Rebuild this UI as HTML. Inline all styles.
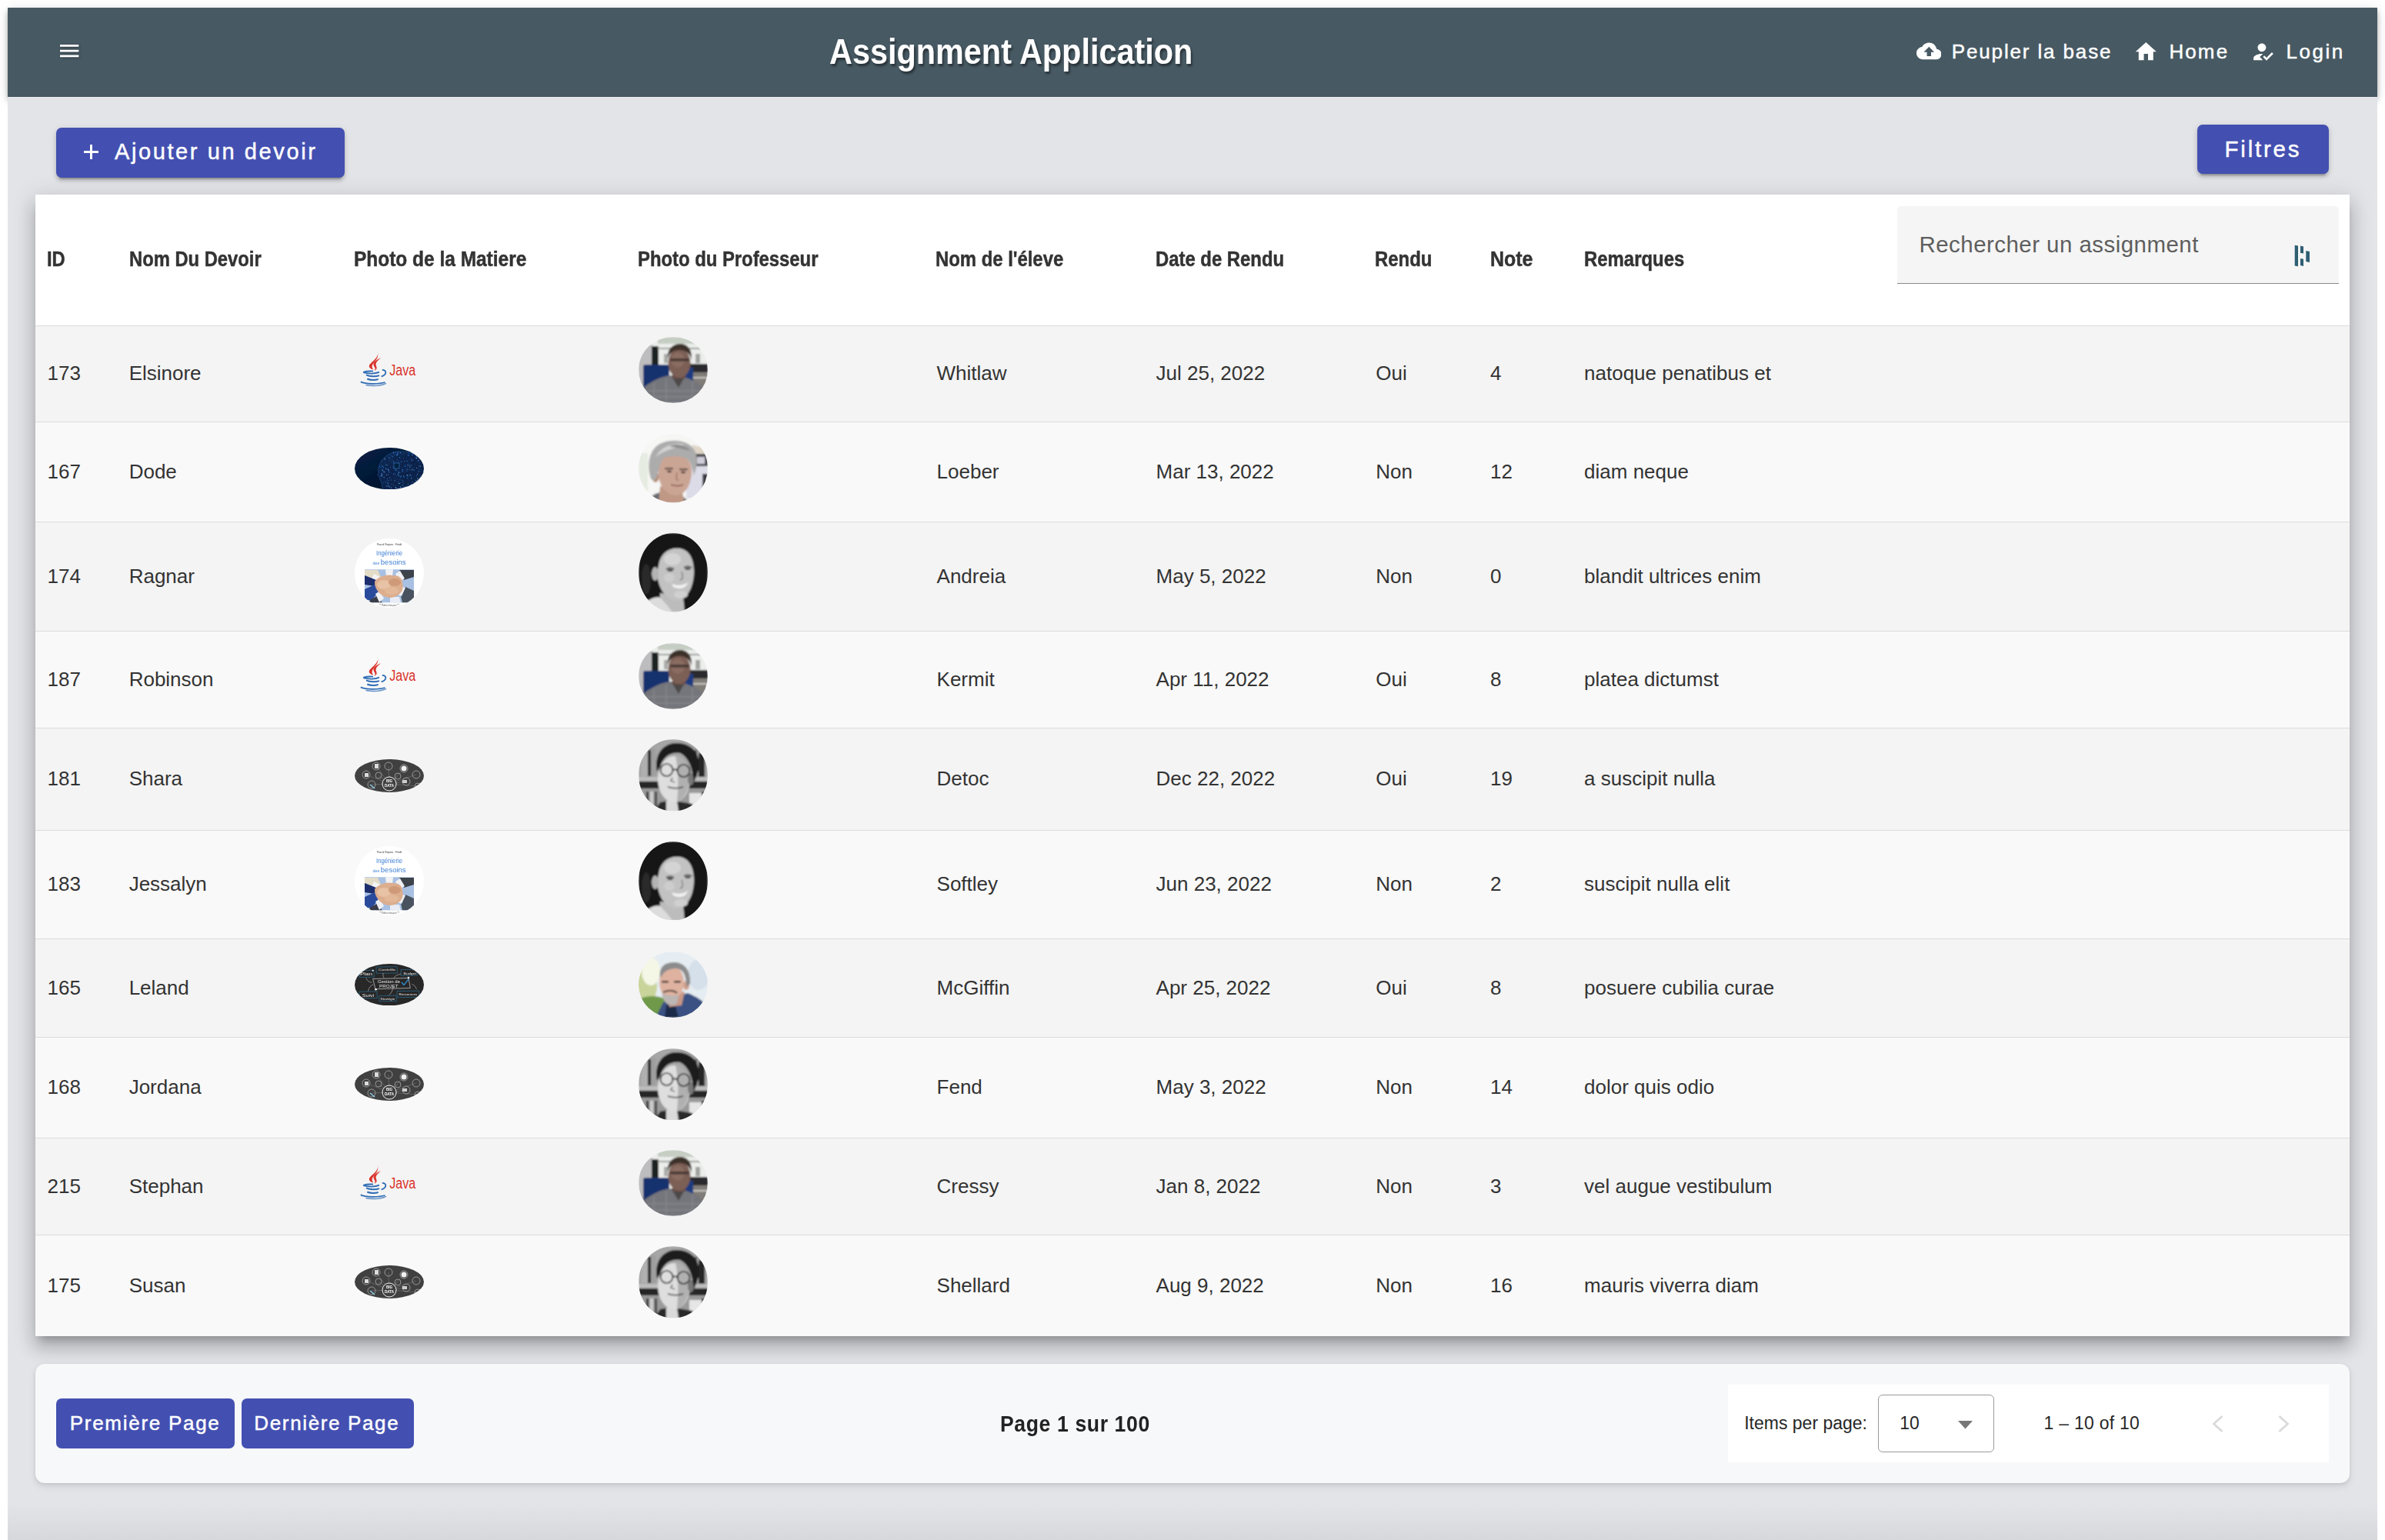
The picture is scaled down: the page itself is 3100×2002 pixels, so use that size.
<!DOCTYPE html>
<html><head><meta charset="utf-8"><title>Assignment Application</title>
<style>
html,body{margin:0;padding:0;}
body{width:3100px;height:2002px;position:relative;overflow:hidden;background:#fff;font-family:"Liberation Sans", sans-serif;}
.t{position:absolute;white-space:nowrap;font-family:"Liberation Sans", sans-serif;}
</style></head><body>
<div style="position:absolute;left:10px;top:10px;width:3080px;height:1992px;background:#e3e4e8;"></div>
<div style="position:absolute;left:10px;top:10px;width:3080px;height:116px;background:#475963;box-shadow:0 3px 6px -1px rgba(0,0,0,.2),0 6px 8px 0 rgba(0,0,0,.14),0 2px 14px 0 rgba(0,0,0,.12);"></div>
<div style="position:absolute;left:10px;top:126px;width:3080px;height:1876px;background:#e3e4e8;"></div>
<div style="position:absolute;left:10px;top:126px;width:3080px;height:1px;background:#e9eaed;"></div>
<div style="position:absolute;left:10px;top:1955px;width:3080px;height:47px;background:linear-gradient(to bottom,rgba(0,0,0,0),rgba(0,0,0,.055));"></div>
<svg style="position:absolute;left:73.60px;top:50.00px;filter:drop-shadow(1px 1.5px 1.5px rgba(0,0,0,.35));" width="32.4" height="32.4" viewBox="0 0 24 24"><path fill="#fff" d="M3 18h18v-2H3v2zm0-5h18v-2H3v2zm0-7v2h18V6H3z"/></svg>
<div class="t" style="left:1078.19px;top:44.20px;font-size:46px;line-height:46px;font-weight:700;color:#fff;letter-spacing:0px;transform:scaleX(0.9);transform-origin:0 0;text-shadow:2px 3px 3px rgba(0,0,0,.45);">Assignment Application</div>
<svg style="position:absolute;left:2490.80px;top:50.40px;" width="32.6" height="32.6" viewBox="0 0 24 24"><path fill="#fff" d="M19.35 10.04C18.67 6.59 15.64 4 12 4 9.11 4 6.6 5.64 5.35 8.04 2.34 8.36 0 10.91 0 14c0 3.31 2.69 6 6 6h13c2.76 0 5-2.24 5-5 0-2.64-2.05-4.78-4.65-4.96zM14 13v4h-4v-4H7l5-5 5 5h-3z"/></svg>
<div class="t" style="left:2536.75px;top:54.30px;font-size:26px;line-height:26px;font-weight:400;color:#fff;letter-spacing:1.86px;-webkit-text-stroke:0.45px #fff;">Peupler la base</div>
<svg style="position:absolute;left:2773.30px;top:50.60px;" width="32.6" height="32.6" viewBox="0 0 24 24"><path fill="#fff" d="M10 20v-6h4v6h5v-8h3L12 3 2 12h3v8z"/></svg>
<div class="t" style="left:2819.45px;top:54.30px;font-size:26px;line-height:26px;font-weight:400;color:#fff;letter-spacing:2.1px;-webkit-text-stroke:0.45px #fff;">Home</div>
<svg style="position:absolute;left:2924.90px;top:50.60px;" width="32.6" height="32.6" viewBox="0 0 24 24"><path fill="#fff" d="M9 17l3-2.94c-.39-.04-.68-.06-1-.06-2.67 0-8 1.34-8 4v2h9l-3-3zm2-5c2.21 0 4-1.79 4-4s-1.79-4-4-4-4 1.79-4 4 1.79 4 4 4m4.47 8.5L12 17l1.4-1.41 2.07 2.08 5.13-5.17 1.4 1.41z"/></svg>
<div class="t" style="left:2971.55px;top:54.30px;font-size:26px;line-height:26px;font-weight:400;color:#fff;letter-spacing:2.5px;-webkit-text-stroke:0.45px #fff;">Login</div>
<div style="position:absolute;left:73px;top:166px;width:375px;height:65px;background:#4350b1;border-radius:7px;box-shadow:0 6px 2px -4px rgba(0,0,0,.2),0 4px 4px 0 rgba(0,0,0,.14),0 2px 10px 0 rgba(0,0,0,.12);"></div>
<div style="position:absolute;left:108.9px;top:196.2px;width:19.1px;height:3px;background:#fff;"></div>
<div style="position:absolute;left:117px;top:188.1px;width:3px;height:19.2px;background:#fff;"></div>
<div class="t" style="left:149.02px;top:183.35px;font-size:29px;line-height:29px;font-weight:400;color:#fff;letter-spacing:2.6px;-webkit-text-stroke:0.45px #fff;">Ajouter un devoir</div>
<div style="position:absolute;left:2856px;top:162px;width:171px;height:64px;background:#4350b1;border-radius:7px;box-shadow:0 6px 2px -4px rgba(0,0,0,.2),0 4px 4px 0 rgba(0,0,0,.14),0 2px 10px 0 rgba(0,0,0,.12);"></div>
<div class="t" style="left:2891.59px;top:179.23px;font-size:29.5px;line-height:29.5px;font-weight:400;color:#fff;letter-spacing:2.75px;-webkit-text-stroke:0.45px #fff;">Filtres</div>
<div style="position:absolute;left:46px;top:253px;width:3008px;height:1484px;background:#fff;box-shadow:0 10px 10px -6px rgba(0,0,0,.2),0 16px 20px 2px rgba(0,0,0,.14),0 6px 28px 4px rgba(0,0,0,.12);"></div>
<div class="t" style="left:61.02px;top:324.45px;font-size:27px;line-height:27px;font-weight:700;color:#333;letter-spacing:0px;transform:scaleX(0.88);transform-origin:0 0;-webkit-text-stroke:0.5px #333;">ID</div>
<div class="t" style="left:167.62px;top:324.45px;font-size:27px;line-height:27px;font-weight:700;color:#333;letter-spacing:0px;transform:scaleX(0.88);transform-origin:0 0;-webkit-text-stroke:0.5px #333;">Nom Du Devoir</div>
<div class="t" style="left:460.17px;top:324.45px;font-size:27px;line-height:27px;font-weight:700;color:#333;letter-spacing:0px;transform:scaleX(0.906);transform-origin:0 0;-webkit-text-stroke:0.5px #333;">Photo de la Matiere</div>
<div class="t" style="left:829.41px;top:324.45px;font-size:27px;line-height:27px;font-weight:700;color:#333;letter-spacing:0px;transform:scaleX(0.883);transform-origin:0 0;-webkit-text-stroke:0.5px #333;">Photo du Professeur</div>
<div class="t" style="left:1216.21px;top:324.45px;font-size:27px;line-height:27px;font-weight:700;color:#333;letter-spacing:0px;transform:scaleX(0.884);transform-origin:0 0;-webkit-text-stroke:0.5px #333;">Nom de l'éleve</div>
<div class="t" style="left:1502.21px;top:324.45px;font-size:27px;line-height:27px;font-weight:700;color:#333;letter-spacing:0px;transform:scaleX(0.884);transform-origin:0 0;-webkit-text-stroke:0.5px #333;">Date de Rendu</div>
<div class="t" style="left:1787.21px;top:324.45px;font-size:27px;line-height:27px;font-weight:700;color:#333;letter-spacing:0px;transform:scaleX(0.886);transform-origin:0 0;-webkit-text-stroke:0.5px #333;">Rendu</div>
<div class="t" style="left:1936.73px;top:324.45px;font-size:27px;line-height:27px;font-weight:700;color:#333;letter-spacing:0px;transform:scaleX(0.924);transform-origin:0 0;-webkit-text-stroke:0.5px #333;">Note</div>
<div class="t" style="left:2059.01px;top:324.45px;font-size:27px;line-height:27px;font-weight:700;color:#333;letter-spacing:0px;transform:scaleX(0.886);transform-origin:0 0;-webkit-text-stroke:0.5px #333;">Remarques</div>
<div style="position:absolute;left:2466px;top:268px;width:574px;height:100px;background:#f5f5f5;border-radius:5px 5px 0 0;"></div>
<div style="position:absolute;left:2466px;top:368px;width:574px;height:1px;background:#8a8a8a;"></div>
<div class="t" style="left:2494.49px;top:302.82px;font-size:29.5px;line-height:29.5px;font-weight:400;color:#5e5e5e;letter-spacing:0.45px;">Rechercher un assignment</div>
<svg style="position:absolute;left:2980px;top:316px" width="26" height="34" viewBox="0 0 26 34"><polygon fill="#2e5f73" points="2.7,2.8 7,3.6 7,30.3 2.7,29.5"/><polygon fill="#2e5f73" points="10,3.6 14,4.4 14,13.6 10,12.8"/><polygon fill="#2e5f73" points="10,20 14,20.8 14,29.9 10,29.1"/><polygon fill="#2e5f73" points="17.3,10 22,10.9 22,24.9 17.3,24"/></svg>
<div style="position:absolute;left:46px;top:423px;width:3008px;height:125px;background:#f4f4f4;"></div>
<div style="position:absolute;left:46px;top:423px;width:3008px;height:1px;background:#dcdcdc;"></div>
<div class="t" style="left:61.55px;top:472.10px;font-size:26px;line-height:26px;font-weight:400;color:#333;letter-spacing:0px;">173</div>
<div class="t" style="left:167.65px;top:472.10px;font-size:26px;line-height:26px;font-weight:400;color:#333;letter-spacing:0px;">Elsinore</div>
<svg style="position:absolute;left:461px;top:450.7px" width="90" height="56" viewBox="0 0 90 56"><path d="M29.6 5.3 C31.5 10 29 13.5 25 17.5 C20 22 17.5 24 19.5 27 C21 28.8 23 29.3 24.3 29.5 C22.8 27.8 21.8 25.5 23.5 22.5 C26 18.5 32.5 14 29.6 5.3 Z" fill="#d9332b"/><path d="M34 14.3 C30.5 15.5 25.5 18.5 24.6 21.5 C23.8 24.5 27 26.5 26.6 28.5 C26.4 29.5 26 30.2 25.8 30.8 C28.5 29.5 29.2 27.5 28.2 25.2 C27 22.5 26.8 20 34 14.3 Z" fill="#d9332b"/><path d="M11.2 32.9 C16 31.2 20.5 31.4 24 31.6 M11.2 33.2 C18 35.3 27 35 32 32.7" fill="none" stroke="#2f6db5" stroke-width="1.9"/><path d="M35.8 29.8 C41.5 30 42.5 36 34.6 38.4" fill="none" stroke="#2f6db5" stroke-width="1.8"/><path d="M15 36.3 C20 38.8 28 38.6 32 37.1" fill="none" stroke="#2f6db5" stroke-width="2"/><path d="M16.3 41.5 C21 43.6 27.5 43.4 30.7 41.9" fill="none" stroke="#2f6db5" stroke-width="2"/><path d="M7.8 45.4 C14 48.5 31 48.6 39.5 46" fill="none" stroke="#2f6db5" stroke-width="1.8"/><path d="M14.5 49.5 C24 51.2 34 50.5 41 47.3" fill="none" stroke="#2f6db5" stroke-width="1.3" opacity=".75"/><text x="45.2" y="37.1" font-family="Liberation Sans" font-size="19.5" fill="#d9332b" textLength="34" lengthAdjust="spacingAndGlyphs">Java</text></svg>
<svg style="position:absolute;left:830px;top:438.2px" width="90" height="86" viewBox="0 0 90 86"><defs><clipPath id="c1"><ellipse cx="45.0" cy="43.0" rx="45.0" ry="43.0"/></clipPath><filter id="f1" x="-10%" y="-10%" width="120%" height="120%"><feGaussianBlur stdDeviation="1.1"/></filter></defs><g clip-path="url(#c1)"><g filter="url(#f1)"><rect x="0" y="0" width="90" height="86" fill="#eceeec"/><rect x="25" y="0" width="65" height="9" fill="#c6cec4"/><rect x="0" y="10" width="18" height="76" fill="#bdbdc0"/><rect x="17" y="12" width="9" height="34" fill="#1e2022"/><rect x="25" y="14" width="65" height="2" fill="#9aa09a"/><rect x="33" y="22" width="5" height="12" fill="#a8aaa8"/><rect x="74" y="22" width="6" height="12" fill="#a0a2a0"/><rect x="62" y="35" width="28" height="11" fill="#2a2b2d"/><rect x="62" y="46" width="28" height="40" fill="#807c78"/><rect x="62" y="52" width="28" height="2" fill="#c8c6c2"/><rect x="6" y="36" width="34" height="34" rx="3" fill="#17306e"/><rect x="58" y="40" width="13" height="18" fill="#1d3a80"/><path d="M0 86 L6 66 C16 58 28 52 40 50 L62 53 C74 57 84 64 90 72 L90 86 Z" fill="#74767c"/><path d="M10 70 L90 70 M10 78 L90 78 M20 60 L20 86 M36 54 L36 86 M70 58 L70 86" stroke="#8a8c90" stroke-width="2.5" opacity=".5"/><path d="M42 50 L52 66 L60 52 Z" fill="#4e4a48"/><rect x="44" y="42" width="17" height="12" fill="#6a5048"/><ellipse cx="53" cy="34" rx="14.5" ry="19" fill="#7c5e54"/><ellipse cx="51" cy="30" rx="9" ry="10" fill="#8a6c60"/><path d="M38 28 C37 13 47 9 54 9 C63 9 70 15 69 30 C67 21 61 17 53 17 C45 17 40 21 38 28Z" fill="#3c302c"/><rect x="41" y="28" width="25" height="3.5" rx="1.5" fill="#463834"/></g></g></svg>
<div class="t" style="left:1217.55px;top:472.10px;font-size:26px;line-height:26px;font-weight:400;color:#333;letter-spacing:0px;">Whitlaw</div>
<div class="t" style="left:1502.55px;top:472.10px;font-size:26px;line-height:26px;font-weight:400;color:#333;letter-spacing:0px;">Jul 25, 2022</div>
<div class="t" style="left:1788.35px;top:472.10px;font-size:26px;line-height:26px;font-weight:400;color:#333;letter-spacing:0px;">Oui</div>
<div class="t" style="left:1937.05px;top:472.10px;font-size:26px;line-height:26px;font-weight:400;color:#333;letter-spacing:0px;">4</div>
<div class="t" style="left:2059.05px;top:472.10px;font-size:26px;line-height:26px;font-weight:400;color:#333;letter-spacing:0px;">natoque penatibus et</div>
<div style="position:absolute;left:46px;top:548px;width:3008px;height:130px;background:#f9f9f9;"></div>
<div style="position:absolute;left:46px;top:548px;width:3008px;height:1px;background:#dcdcdc;"></div>
<div class="t" style="left:61.55px;top:599.60px;font-size:26px;line-height:26px;font-weight:400;color:#333;letter-spacing:0px;">167</div>
<div class="t" style="left:167.65px;top:599.60px;font-size:26px;line-height:26px;font-weight:400;color:#333;letter-spacing:0px;">Dode</div>
<svg style="position:absolute;left:461px;top:581.5px" width="90" height="54.4" viewBox="0 0 90 54.4"><defs><clipPath id="c2"><ellipse cx="45.0" cy="27.2" rx="45.0" ry="27.2"/></clipPath><filter id="f2" x="-10%" y="-10%" width="120%" height="120%"><feGaussianBlur stdDeviation="0.2"/></filter></defs><g clip-path="url(#c2)"><g filter="url(#f2)"><defs><linearGradient id="aig" x1="0" y1="0" x2="1" y2="1"><stop offset="0" stop-color="#082247"/><stop offset=".6" stop-color="#041630"/><stop offset="1" stop-color="#020c1c"/></linearGradient></defs><rect x="0" y="0" width="90" height="55" fill="url(#aig)"/><path d="M36 52 C36 46 33 42 32 38 L29.5 35 L31.5 33 L30.5 30 C31 22 36 12 48 7 C62 2 82 6 92 20 L92 56 L40 56 Z" fill="#0b2f63" opacity=".55"/><circle cx="49.4" cy="11.8" r="0.58" fill="#3b8ef0" opacity="0.91"/><circle cx="34.9" cy="34.3" r="0.70" fill="#5aa8ff" opacity="0.52"/><circle cx="56.3" cy="7.6" r="0.30" fill="#8cc4ff" opacity="0.53"/><circle cx="64.6" cy="53.3" r="0.57" fill="#1e5bb0" opacity="0.97"/><circle cx="65.4" cy="24.6" r="0.74" fill="#3b8ef0" opacity="0.78"/><circle cx="37.4" cy="25.8" r="0.52" fill="#1e5bb0" opacity="0.65"/><circle cx="80.4" cy="13.4" r="0.54" fill="#5aa8ff" opacity="0.69"/><circle cx="63.5" cy="7.3" r="0.28" fill="#5aa8ff" opacity="0.75"/><circle cx="62.5" cy="44.4" r="0.48" fill="#8cc4ff" opacity="0.68"/><circle cx="44.7" cy="13.3" r="0.64" fill="#3b8ef0" opacity="0.79"/><circle cx="62.1" cy="49.5" r="0.61" fill="#2a70d0" opacity="0.80"/><circle cx="33.6" cy="30.6" r="0.33" fill="#2a70d0" opacity="0.58"/><circle cx="59.8" cy="6.0" r="0.58" fill="#1e5bb0" opacity="0.79"/><circle cx="84.2" cy="20.3" r="0.60" fill="#1e5bb0" opacity="0.75"/><circle cx="79.2" cy="7.6" r="0.30" fill="#2a70d0" opacity="0.74"/><circle cx="70.8" cy="7.2" r="0.60" fill="#1e5bb0" opacity="1.00"/><circle cx="80.8" cy="18.8" r="0.44" fill="#2a70d0" opacity="0.51"/><circle cx="58.1" cy="12.7" r="0.31" fill="#3b8ef0" opacity="0.61"/><circle cx="47.1" cy="42.4" r="0.45" fill="#8cc4ff" opacity="0.54"/><circle cx="57.3" cy="32.6" r="0.69" fill="#8cc4ff" opacity="0.93"/><circle cx="46.5" cy="25.6" r="0.43" fill="#8cc4ff" opacity="0.98"/><circle cx="38.5" cy="13.2" r="0.37" fill="#5aa8ff" opacity="0.51"/><circle cx="81.4" cy="13.5" r="0.39" fill="#5aa8ff" opacity="0.71"/><circle cx="52.3" cy="33.4" r="0.73" fill="#1e5bb0" opacity="0.98"/><circle cx="70.3" cy="42.5" r="0.48" fill="#1e5bb0" opacity="0.70"/><circle cx="54.1" cy="9.4" r="0.57" fill="#3b8ef0" opacity="0.60"/><circle cx="91.0" cy="26.9" r="0.30" fill="#1e5bb0" opacity="0.53"/><circle cx="35.4" cy="22.9" r="0.26" fill="#5aa8ff" opacity="0.81"/><circle cx="38.4" cy="17.1" r="0.42" fill="#2a70d0" opacity="0.74"/><circle cx="36.3" cy="29.4" r="0.74" fill="#8cc4ff" opacity="0.74"/><circle cx="50.6" cy="17.8" r="0.66" fill="#5aa8ff" opacity="0.76"/><circle cx="51.8" cy="39.9" r="0.71" fill="#1e5bb0" opacity="0.65"/><circle cx="69.5" cy="8.7" r="0.67" fill="#1e5bb0" opacity="0.68"/><circle cx="39.5" cy="44.1" r="0.52" fill="#1e5bb0" opacity="0.66"/><circle cx="43.1" cy="46.2" r="0.74" fill="#5aa8ff" opacity="0.90"/><circle cx="80.6" cy="42.5" r="0.36" fill="#1e5bb0" opacity="0.75"/><circle cx="78.8" cy="28.6" r="0.35" fill="#1e5bb0" opacity="0.98"/><circle cx="57.2" cy="52.7" r="0.74" fill="#2a70d0" opacity="0.54"/><circle cx="35.4" cy="28.4" r="0.42" fill="#8cc4ff" opacity="0.81"/><circle cx="59.2" cy="38.0" r="0.65" fill="#3b8ef0" opacity="0.92"/><circle cx="36.6" cy="24.2" r="0.61" fill="#5aa8ff" opacity="0.74"/><circle cx="40.2" cy="45.0" r="0.42" fill="#8cc4ff" opacity="0.73"/><circle cx="75.8" cy="8.4" r="0.33" fill="#5aa8ff" opacity="0.51"/><circle cx="66.2" cy="28.2" r="0.58" fill="#1e5bb0" opacity="0.91"/><circle cx="90.8" cy="38.2" r="0.43" fill="#1e5bb0" opacity="0.77"/><circle cx="74.8" cy="9.3" r="0.62" fill="#5aa8ff" opacity="0.72"/><circle cx="83.9" cy="47.0" r="0.36" fill="#2a70d0" opacity="0.61"/><circle cx="60.6" cy="43.7" r="0.41" fill="#1e5bb0" opacity="0.71"/><circle cx="51.3" cy="27.8" r="0.54" fill="#1e5bb0" opacity="0.71"/><circle cx="86.8" cy="30.1" r="0.52" fill="#1e5bb0" opacity="0.76"/><circle cx="84.0" cy="44.4" r="0.55" fill="#5aa8ff" opacity="0.59"/><circle cx="58.8" cy="41.7" r="0.53" fill="#2a70d0" opacity="0.84"/><circle cx="62.4" cy="29.1" r="0.64" fill="#1e5bb0" opacity="0.53"/><circle cx="35.2" cy="27.5" r="0.26" fill="#3b8ef0" opacity="0.72"/><circle cx="67.6" cy="30.3" r="0.51" fill="#2a70d0" opacity="0.73"/><circle cx="62.6" cy="28.9" r="0.72" fill="#1e5bb0" opacity="0.94"/><circle cx="88.4" cy="17.5" r="0.53" fill="#5aa8ff" opacity="0.92"/><circle cx="56.9" cy="7.8" r="0.37" fill="#3b8ef0" opacity="0.61"/><circle cx="48.1" cy="10.4" r="0.64" fill="#2a70d0" opacity="0.57"/><circle cx="54.1" cy="29.3" r="0.74" fill="#5aa8ff" opacity="0.58"/><circle cx="56.2" cy="30.8" r="0.42" fill="#5aa8ff" opacity="0.68"/><circle cx="34.8" cy="23.0" r="0.42" fill="#8cc4ff" opacity="0.72"/><circle cx="68.3" cy="30.6" r="0.28" fill="#5aa8ff" opacity="0.99"/><circle cx="35.6" cy="17.8" r="0.27" fill="#5aa8ff" opacity="0.64"/><circle cx="37.2" cy="26.0" r="0.71" fill="#2a70d0" opacity="0.70"/><circle cx="62.8" cy="30.8" r="0.50" fill="#2a70d0" opacity="0.54"/><circle cx="55.8" cy="7.8" r="0.72" fill="#3b8ef0" opacity="0.90"/><circle cx="57.6" cy="21.6" r="0.53" fill="#2a70d0" opacity="0.81"/><circle cx="45.5" cy="13.4" r="0.72" fill="#2a70d0" opacity="0.77"/><circle cx="42.0" cy="27.2" r="0.59" fill="#2a70d0" opacity="0.67"/><circle cx="63.7" cy="13.9" r="0.49" fill="#8cc4ff" opacity="0.55"/><circle cx="80.6" cy="26.5" r="0.50" fill="#8cc4ff" opacity="0.99"/><circle cx="48.4" cy="15.2" r="0.36" fill="#5aa8ff" opacity="0.92"/><circle cx="73.5" cy="37.1" r="0.45" fill="#2a70d0" opacity="0.99"/><circle cx="68.4" cy="49.8" r="0.47" fill="#3b8ef0" opacity="0.54"/><circle cx="82.0" cy="49.3" r="0.59" fill="#2a70d0" opacity="0.80"/><circle cx="72.6" cy="6.4" r="0.34" fill="#2a70d0" opacity="0.72"/><circle cx="90.3" cy="32.4" r="0.37" fill="#2a70d0" opacity="0.61"/><circle cx="40.5" cy="21.4" r="0.29" fill="#2a70d0" opacity="0.75"/><circle cx="41.7" cy="30.2" r="0.25" fill="#2a70d0" opacity="0.91"/><circle cx="38.1" cy="34.5" r="0.45" fill="#2a70d0" opacity="0.65"/><circle cx="43.7" cy="34.5" r="0.51" fill="#5aa8ff" opacity="0.83"/><circle cx="74.1" cy="49.7" r="0.44" fill="#2a70d0" opacity="0.86"/><circle cx="60.1" cy="18.8" r="0.56" fill="#5aa8ff" opacity="0.52"/><circle cx="81.6" cy="50.4" r="0.56" fill="#1e5bb0" opacity="0.57"/><circle cx="62.0" cy="30.2" r="0.67" fill="#3b8ef0" opacity="0.91"/><circle cx="65.8" cy="50.4" r="0.59" fill="#5aa8ff" opacity="0.54"/><circle cx="89.4" cy="23.6" r="0.48" fill="#3b8ef0" opacity="0.81"/><circle cx="68.5" cy="39.4" r="0.49" fill="#3b8ef0" opacity="0.73"/><circle cx="62.1" cy="42.8" r="0.49" fill="#3b8ef0" opacity="0.92"/><circle cx="43.8" cy="43.3" r="0.37" fill="#8cc4ff" opacity="0.75"/><circle cx="53.1" cy="28.9" r="0.59" fill="#3b8ef0" opacity="0.81"/><circle cx="69.5" cy="8.0" r="0.32" fill="#2a70d0" opacity="0.83"/><circle cx="72.7" cy="36.3" r="0.32" fill="#8cc4ff" opacity="0.53"/><circle cx="45.9" cy="38.9" r="0.60" fill="#8cc4ff" opacity="0.65"/><circle cx="61.5" cy="28.2" r="0.48" fill="#3b8ef0" opacity="1.00"/><circle cx="63.6" cy="20.2" r="0.29" fill="#8cc4ff" opacity="0.51"/><circle cx="57.9" cy="46.6" r="0.73" fill="#8cc4ff" opacity="1.00"/><circle cx="53.4" cy="51.7" r="0.72" fill="#3b8ef0" opacity="0.79"/><circle cx="37.9" cy="31.3" r="0.73" fill="#5aa8ff" opacity="0.80"/><circle cx="68.8" cy="18.5" r="0.31" fill="#2a70d0" opacity="0.62"/><circle cx="85.6" cy="29.3" r="0.26" fill="#3b8ef0" opacity="0.97"/><circle cx="71.9" cy="25.1" r="0.61" fill="#8cc4ff" opacity="0.67"/><circle cx="48.9" cy="47.7" r="0.25" fill="#2a70d0" opacity="0.92"/><circle cx="73.9" cy="50.9" r="0.39" fill="#2a70d0" opacity="0.53"/><circle cx="53.6" cy="49.2" r="0.29" fill="#8cc4ff" opacity="0.88"/><circle cx="82.8" cy="18.6" r="0.28" fill="#2a70d0" opacity="0.82"/><circle cx="56.5" cy="20.4" r="0.64" fill="#8cc4ff" opacity="0.94"/><circle cx="80.2" cy="36.8" r="0.71" fill="#1e5bb0" opacity="0.77"/><circle cx="74.3" cy="6.6" r="0.62" fill="#8cc4ff" opacity="0.81"/><circle cx="59.6" cy="51.4" r="0.53" fill="#5aa8ff" opacity="0.74"/><circle cx="50.7" cy="19.5" r="0.62" fill="#2a70d0" opacity="0.70"/><circle cx="44.0" cy="29.1" r="0.58" fill="#3b8ef0" opacity="0.58"/><circle cx="39.2" cy="14.8" r="0.70" fill="#8cc4ff" opacity="0.78"/><circle cx="57.5" cy="21.3" r="0.63" fill="#8cc4ff" opacity="0.57"/><circle cx="50.5" cy="8.7" r="0.37" fill="#2a70d0" opacity="0.90"/><circle cx="83.8" cy="23.9" r="0.62" fill="#5aa8ff" opacity="0.69"/><circle cx="50.3" cy="7.2" r="0.39" fill="#2a70d0" opacity="0.56"/><circle cx="60.7" cy="36.7" r="0.68" fill="#5aa8ff" opacity="0.55"/><circle cx="85.5" cy="24.0" r="0.57" fill="#8cc4ff" opacity="0.98"/><circle cx="82.5" cy="49.4" r="0.26" fill="#3b8ef0" opacity="0.71"/><circle cx="77.1" cy="45.8" r="0.73" fill="#8cc4ff" opacity="0.50"/><circle cx="53.7" cy="52.2" r="0.66" fill="#8cc4ff" opacity="0.99"/><circle cx="44.7" cy="9.7" r="0.33" fill="#1e5bb0" opacity="0.99"/><circle cx="73.2" cy="48.0" r="0.70" fill="#3b8ef0" opacity="0.78"/><circle cx="69.7" cy="19.8" r="0.31" fill="#2a70d0" opacity="0.76"/><circle cx="56.6" cy="43.7" r="0.30" fill="#2a70d0" opacity="0.76"/><circle cx="65.7" cy="24.2" r="0.36" fill="#1e5bb0" opacity="0.50"/><circle cx="62.9" cy="55.8" r="0.39" fill="#2a70d0" opacity="0.82"/><circle cx="84.7" cy="28.7" r="0.37" fill="#5aa8ff" opacity="0.51"/><circle cx="54.9" cy="37.8" r="0.28" fill="#5aa8ff" opacity="0.75"/><circle cx="71.5" cy="25.8" r="0.38" fill="#8cc4ff" opacity="0.96"/><circle cx="50.3" cy="25.9" r="0.59" fill="#5aa8ff" opacity="0.50"/><circle cx="47.4" cy="47.9" r="0.28" fill="#8cc4ff" opacity="0.98"/><circle cx="48.6" cy="46.6" r="0.37" fill="#5aa8ff" opacity="0.63"/><circle cx="68.3" cy="35.7" r="0.70" fill="#8cc4ff" opacity="0.71"/><circle cx="70.9" cy="53.3" r="0.32" fill="#8cc4ff" opacity="0.53"/><circle cx="55.2" cy="40.9" r="0.34" fill="#8cc4ff" opacity="0.95"/><circle cx="84.7" cy="42.1" r="0.75" fill="#5aa8ff" opacity="0.66"/><circle cx="70.9" cy="23.7" r="0.44" fill="#2a70d0" opacity="0.72"/><circle cx="34.1" cy="25.8" r="0.69" fill="#1e5bb0" opacity="0.98"/><circle cx="42.1" cy="22.5" r="0.66" fill="#8cc4ff" opacity="0.54"/><circle cx="73.4" cy="14.2" r="0.52" fill="#8cc4ff" opacity="0.60"/><circle cx="51.9" cy="50.6" r="0.27" fill="#8cc4ff" opacity="0.62"/><circle cx="68.4" cy="25.0" r="0.44" fill="#8cc4ff" opacity="0.53"/><circle cx="87.0" cy="17.4" r="0.62" fill="#1e5bb0" opacity="0.67"/><circle cx="67.9" cy="17.6" r="0.61" fill="#2a70d0" opacity="0.96"/><circle cx="47.7" cy="41.5" r="0.55" fill="#3b8ef0" opacity="0.51"/><circle cx="43.7" cy="28.7" r="0.73" fill="#8cc4ff" opacity="0.89"/><circle cx="86.6" cy="46.4" r="0.32" fill="#8cc4ff" opacity="0.59"/><circle cx="79.6" cy="42.4" r="0.66" fill="#5aa8ff" opacity="0.80"/><circle cx="49.7" cy="20.6" r="0.43" fill="#1e5bb0" opacity="0.54"/><circle cx="41.4" cy="43.2" r="0.37" fill="#3b8ef0" opacity="0.82"/><circle cx="59.3" cy="32.3" r="0.33" fill="#8cc4ff" opacity="0.94"/><circle cx="60.4" cy="40.9" r="0.47" fill="#5aa8ff" opacity="0.57"/><circle cx="58.0" cy="50.3" r="0.37" fill="#1e5bb0" opacity="0.92"/><circle cx="70.9" cy="10.3" r="0.67" fill="#2a70d0" opacity="0.64"/><circle cx="45.9" cy="17.2" r="0.38" fill="#8cc4ff" opacity="0.62"/><circle cx="44.5" cy="12.0" r="0.69" fill="#1e5bb0" opacity="0.59"/><circle cx="44.5" cy="31.4" r="0.57" fill="#3b8ef0" opacity="0.83"/><circle cx="58.9" cy="46.6" r="0.67" fill="#2a70d0" opacity="0.52"/><circle cx="47.5" cy="10.2" r="0.34" fill="#1e5bb0" opacity="0.60"/><circle cx="33.7" cy="30.7" r="0.34" fill="#1e5bb0" opacity="0.63"/><circle cx="35.7" cy="35.0" r="0.56" fill="#5aa8ff" opacity="0.52"/><circle cx="50.4" cy="6.3" r="0.75" fill="#3b8ef0" opacity="0.80"/><circle cx="70.1" cy="14.6" r="0.26" fill="#2a70d0" opacity="0.70"/><circle cx="52.4" cy="36.3" r="0.29" fill="#3b8ef0" opacity="0.90"/><circle cx="63.5" cy="7.3" r="0.30" fill="#8cc4ff" opacity="0.83"/><circle cx="38.7" cy="31.8" r="0.58" fill="#8cc4ff" opacity="0.85"/><circle cx="54.8" cy="18.7" r="0.40" fill="#3b8ef0" opacity="0.66"/><circle cx="64.7" cy="22.6" r="0.46" fill="#2a70d0" opacity="0.82"/><circle cx="53.6" cy="25.1" r="0.72" fill="#8cc4ff" opacity="0.95"/><circle cx="55.7" cy="46.7" r="0.45" fill="#2a70d0" opacity="0.73"/><circle cx="63.7" cy="37.3" r="0.70" fill="#3b8ef0" opacity="0.79"/><circle cx="87.4" cy="42.3" r="0.34" fill="#2a70d0" opacity="0.64"/><circle cx="61.8" cy="52.1" r="0.30" fill="#8cc4ff" opacity="0.88"/><circle cx="78.9" cy="45.8" r="0.40" fill="#3b8ef0" opacity="0.99"/><circle cx="59.4" cy="6.8" r="0.71" fill="#8cc4ff" opacity="0.54"/><circle cx="73.9" cy="39.8" r="0.70" fill="#5aa8ff" opacity="0.81"/><circle cx="67.7" cy="14.2" r="0.49" fill="#1e5bb0" opacity="0.61"/><circle cx="54.2" cy="30.9" r="0.44" fill="#3b8ef0" opacity="0.57"/><circle cx="41.1" cy="50.0" r="0.67" fill="#3b8ef0" opacity="0.83"/><circle cx="49.4" cy="24.3" r="0.48" fill="#2a70d0" opacity="0.82"/><circle cx="48.4" cy="17.0" r="0.44" fill="#2a70d0" opacity="0.72"/><circle cx="56.6" cy="5.2" r="0.56" fill="#8cc4ff" opacity="0.73"/><circle cx="57.1" cy="36.2" r="0.66" fill="#5aa8ff" opacity="0.91"/><circle cx="54.2" cy="7.5" r="0.43" fill="#2a70d0" opacity="0.55"/><circle cx="56.8" cy="30.5" r="0.27" fill="#5aa8ff" opacity="0.54"/><circle cx="75.2" cy="44.4" r="0.51" fill="#3b8ef0" opacity="0.88"/><circle cx="85.4" cy="37.9" r="0.64" fill="#3b8ef0" opacity="0.93"/><circle cx="80.3" cy="14.1" r="0.74" fill="#8cc4ff" opacity="0.64"/><circle cx="80.1" cy="45.3" r="0.59" fill="#5aa8ff" opacity="0.53"/><circle cx="51.1" cy="43.3" r="0.33" fill="#1e5bb0" opacity="0.64"/><circle cx="80.4" cy="11.5" r="0.50" fill="#8cc4ff" opacity="0.60"/><circle cx="45.6" cy="30.3" r="0.41" fill="#3b8ef0" opacity="0.60"/><circle cx="54.4" cy="37.1" r="0.39" fill="#2a70d0" opacity="0.95"/><circle cx="39.6" cy="44.8" r="0.31" fill="#1e5bb0" opacity="0.52"/><circle cx="57.5" cy="31.1" r="0.59" fill="#3b8ef0" opacity="0.63"/><circle cx="62.7" cy="48.5" r="0.62" fill="#2a70d0" opacity="0.63"/><circle cx="91.4" cy="34.0" r="0.43" fill="#3b8ef0" opacity="0.72"/><circle cx="40.1" cy="42.7" r="0.27" fill="#1e5bb0" opacity="0.63"/><circle cx="69.3" cy="55.2" r="0.54" fill="#2a70d0" opacity="0.87"/><circle cx="76.1" cy="15.5" r="0.40" fill="#8cc4ff" opacity="0.71"/><circle cx="51.9" cy="6.5" r="0.49" fill="#1e5bb0" opacity="0.83"/><circle cx="51.4" cy="9.5" r="0.43" fill="#5aa8ff" opacity="0.71"/><circle cx="48.0" cy="11.0" r="0.43" fill="#8cc4ff" opacity="0.58"/><circle cx="73.6" cy="27.4" r="0.28" fill="#5aa8ff" opacity="0.94"/><circle cx="78.3" cy="24.9" r="0.38" fill="#3b8ef0" opacity="0.53"/><circle cx="80.7" cy="50.4" r="0.55" fill="#1e5bb0" opacity="0.72"/><circle cx="88.0" cy="42.1" r="0.37" fill="#3b8ef0" opacity="0.52"/><circle cx="62.5" cy="25.1" r="0.37" fill="#3b8ef0" opacity="0.96"/><circle cx="35.6" cy="35.9" r="0.58" fill="#5aa8ff" opacity="0.57"/><circle cx="41.6" cy="35.6" r="0.50" fill="#8cc4ff" opacity="0.91"/><circle cx="40.0" cy="20.1" r="0.40" fill="#3b8ef0" opacity="1.00"/><circle cx="74.6" cy="28.9" r="0.52" fill="#8cc4ff" opacity="0.92"/><circle cx="75.9" cy="28.2" r="0.62" fill="#8cc4ff" opacity="0.59"/><circle cx="69.6" cy="10.4" r="0.70" fill="#2a70d0" opacity="0.86"/><circle cx="45.8" cy="32.8" r="0.47" fill="#1e5bb0" opacity="0.99"/><circle cx="47.6" cy="52.3" r="0.70" fill="#3b8ef0" opacity="0.94"/><circle cx="43.9" cy="42.7" r="0.72" fill="#2a70d0" opacity="0.60"/><circle cx="53.5" cy="35.3" r="0.44" fill="#1e5bb0" opacity="0.73"/><circle cx="81.9" cy="40.3" r="0.68" fill="#8cc4ff" opacity="0.98"/><circle cx="43.7" cy="50.0" r="0.64" fill="#8cc4ff" opacity="0.81"/><circle cx="50.7" cy="11.4" r="0.26" fill="#3b8ef0" opacity="0.57"/><circle cx="69.5" cy="6.2" r="0.28" fill="#3b8ef0" opacity="0.53"/><circle cx="66.2" cy="22.9" r="0.66" fill="#1e5bb0" opacity="0.95"/><circle cx="82.4" cy="46.2" r="0.57" fill="#2a70d0" opacity="0.74"/><circle cx="37.4" cy="45.2" r="0.57" fill="#2a70d0" opacity="0.66"/><circle cx="55.7" cy="5.1" r="0.38" fill="#2a70d0" opacity="0.52"/><circle cx="76.9" cy="51.3" r="0.63" fill="#1e5bb0" opacity="0.75"/><circle cx="82.6" cy="36.2" r="0.27" fill="#8cc4ff" opacity="0.52"/><circle cx="61.7" cy="9.1" r="0.48" fill="#3b8ef0" opacity="0.77"/><circle cx="42.6" cy="48.8" r="0.30" fill="#2a70d0" opacity="0.59"/><circle cx="60.0" cy="45.4" r="0.34" fill="#8cc4ff" opacity="0.80"/><circle cx="89.3" cy="30.8" r="0.54" fill="#5aa8ff" opacity="0.64"/><circle cx="42.5" cy="40.4" r="0.50" fill="#3b8ef0" opacity="0.97"/><circle cx="77.3" cy="29.5" r="0.75" fill="#1e5bb0" opacity="0.89"/><circle cx="68.6" cy="22.5" r="0.45" fill="#8cc4ff" opacity="0.95"/><circle cx="75.9" cy="26.0" r="0.57" fill="#2a70d0" opacity="0.60"/><circle cx="45.6" cy="50.9" r="0.50" fill="#8cc4ff" opacity="0.99"/><circle cx="68.7" cy="53.1" r="0.31" fill="#1e5bb0" opacity="0.88"/><circle cx="76.4" cy="37.6" r="0.42" fill="#2a70d0" opacity="0.76"/><circle cx="83.7" cy="27.4" r="0.53" fill="#2a70d0" opacity="0.58"/><circle cx="56.6" cy="44.2" r="0.54" fill="#5aa8ff" opacity="0.67"/><circle cx="69.5" cy="40.2" r="0.50" fill="#2a70d0" opacity="0.65"/><circle cx="73.3" cy="47.9" r="0.33" fill="#5aa8ff" opacity="0.99"/><circle cx="74.6" cy="35.4" r="0.42" fill="#5aa8ff" opacity="0.66"/><circle cx="74.9" cy="9.3" r="0.73" fill="#3b8ef0" opacity="0.60"/><circle cx="48.0" cy="19.5" r="0.39" fill="#3b8ef0" opacity="0.82"/><circle cx="53.5" cy="5.8" r="0.45" fill="#8cc4ff" opacity="0.85"/><circle cx="60.5" cy="36.9" r="0.48" fill="#5aa8ff" opacity="0.63"/><circle cx="44.3" cy="48.4" r="0.60" fill="#1e5bb0" opacity="0.87"/><circle cx="55.5" cy="15.9" r="0.61" fill="#1e5bb0" opacity="0.93"/><circle cx="71.8" cy="37.4" r="0.48" fill="#2a70d0" opacity="0.63"/><circle cx="73.1" cy="50.5" r="0.37" fill="#8cc4ff" opacity="0.86"/><circle cx="68.7" cy="17.0" r="0.46" fill="#8cc4ff" opacity="0.51"/><circle cx="83.1" cy="30.9" r="0.58" fill="#5aa8ff" opacity="0.95"/><circle cx="35.7" cy="17.1" r="0.36" fill="#5aa8ff" opacity="0.76"/><circle cx="35.4" cy="33.9" r="0.52" fill="#8cc4ff" opacity="0.76"/><circle cx="69.3" cy="47.1" r="0.51" fill="#8cc4ff" opacity="0.87"/><circle cx="57.8" cy="55.5" r="0.34" fill="#1e5bb0" opacity="0.88"/><circle cx="51.4" cy="6.9" r="0.39" fill="#8cc4ff" opacity="0.53"/><circle cx="68.6" cy="39.1" r="0.54" fill="#3b8ef0" opacity="0.61"/><circle cx="75.7" cy="52.9" r="0.51" fill="#5aa8ff" opacity="1.00"/><circle cx="89.5" cy="28.0" r="0.33" fill="#3b8ef0" opacity="0.90"/><circle cx="69.0" cy="28.4" r="0.53" fill="#5aa8ff" opacity="0.91"/><circle cx="38.2" cy="38.6" r="0.67" fill="#8cc4ff" opacity="0.73"/><circle cx="47.5" cy="32.5" r="0.31" fill="#8cc4ff" opacity="0.68"/><circle cx="82.6" cy="17.9" r="0.44" fill="#2a70d0" opacity="0.99"/><circle cx="71.8" cy="29.0" r="0.65" fill="#2a70d0" opacity="0.68"/><circle cx="70.2" cy="20.7" r="0.49" fill="#1e5bb0" opacity="0.82"/><circle cx="70.5" cy="22.8" r="0.71" fill="#8cc4ff" opacity="0.53"/><circle cx="81.2" cy="51.1" r="0.64" fill="#5aa8ff" opacity="0.77"/><circle cx="50.7" cy="34.3" r="0.58" fill="#5aa8ff" opacity="0.98"/><circle cx="70.3" cy="17.0" r="0.30" fill="#5aa8ff" opacity="0.93"/><circle cx="40.7" cy="27.5" r="0.64" fill="#5aa8ff" opacity="0.95"/><circle cx="78.9" cy="12.7" r="0.70" fill="#1e5bb0" opacity="0.99"/><circle cx="63.6" cy="37.1" r="0.40" fill="#8cc4ff" opacity="0.85"/><circle cx="62.4" cy="42.6" r="0.47" fill="#3b8ef0" opacity="0.78"/><circle cx="45.7" cy="16.2" r="0.32" fill="#8cc4ff" opacity="0.78"/><circle cx="59.5" cy="51.1" r="0.60" fill="#5aa8ff" opacity="0.75"/><circle cx="63.0" cy="48.9" r="0.25" fill="#2a70d0" opacity="0.73"/><circle cx="64.4" cy="38.6" r="0.67" fill="#2a70d0" opacity="0.71"/><circle cx="40.4" cy="22.7" r="0.57" fill="#3b8ef0" opacity="0.80"/><circle cx="72.0" cy="52.4" r="0.42" fill="#3b8ef0" opacity="0.76"/><circle cx="59.5" cy="50.7" r="0.27" fill="#8cc4ff" opacity="0.81"/><circle cx="50.3" cy="48.8" r="0.43" fill="#8cc4ff" opacity="0.89"/><circle cx="63.9" cy="51.4" r="0.39" fill="#2a70d0" opacity="0.71"/><circle cx="63.9" cy="47.0" r="0.40" fill="#8cc4ff" opacity="0.70"/><circle cx="60.7" cy="18.1" r="0.50" fill="#5aa8ff" opacity="0.83"/><circle cx="78.9" cy="21.2" r="0.41" fill="#2a70d0" opacity="0.56"/><circle cx="91.8" cy="24.7" r="0.53" fill="#8cc4ff" opacity="0.77"/><circle cx="87.1" cy="35.7" r="0.58" fill="#1e5bb0" opacity="0.95"/><circle cx="67.5" cy="36.1" r="0.56" fill="#1e5bb0" opacity="0.94"/><circle cx="68.9" cy="36.5" r="0.34" fill="#5aa8ff" opacity="0.93"/><circle cx="55.6" cy="9.2" r="0.72" fill="#3b8ef0" opacity="0.68"/><circle cx="80.8" cy="44.9" r="0.53" fill="#2a70d0" opacity="0.93"/><circle cx="65.4" cy="51.5" r="0.50" fill="#1e5bb0" opacity="0.52"/><circle cx="65.2" cy="51.8" r="0.47" fill="#3b8ef0" opacity="0.84"/><circle cx="66.4" cy="55.6" r="0.58" fill="#5aa8ff" opacity="0.74"/><circle cx="55.0" cy="9.3" r="0.57" fill="#5aa8ff" opacity="0.95"/><circle cx="68.5" cy="26.2" r="0.25" fill="#3b8ef0" opacity="0.99"/><circle cx="83.1" cy="15.3" r="0.31" fill="#8cc4ff" opacity="0.51"/><circle cx="74.3" cy="16.6" r="0.62" fill="#5aa8ff" opacity="0.96"/><circle cx="52.1" cy="42.9" r="0.60" fill="#5aa8ff" opacity="0.86"/><circle cx="34.3" cy="36.7" r="0.60" fill="#8cc4ff" opacity="0.83"/><circle cx="72.3" cy="36.1" r="0.44" fill="#2a70d0" opacity="0.86"/><circle cx="59.6" cy="7.1" r="0.43" fill="#1e5bb0" opacity="0.86"/><circle cx="58.6" cy="12.7" r="0.73" fill="#3b8ef0" opacity="0.68"/><circle cx="69.6" cy="36.7" r="0.46" fill="#8cc4ff" opacity="0.89"/><circle cx="57.5" cy="18.1" r="0.63" fill="#2a70d0" opacity="0.65"/><circle cx="73.3" cy="47.0" r="0.42" fill="#1e5bb0" opacity="0.86"/><circle cx="81.5" cy="34.4" r="0.74" fill="#5aa8ff" opacity="0.69"/><circle cx="72.1" cy="35.3" r="0.70" fill="#8cc4ff" opacity="0.64"/><circle cx="55.6" cy="34.5" r="0.66" fill="#3b8ef0" opacity="0.64"/><circle cx="63.5" cy="44.4" r="0.50" fill="#1e5bb0" opacity="0.54"/><circle cx="63.9" cy="45.5" r="0.35" fill="#5aa8ff" opacity="0.65"/><circle cx="32.6" cy="24.6" r="0.60" fill="#2a70d0" opacity="0.79"/><circle cx="63.1" cy="31.9" r="0.43" fill="#3b8ef0" opacity="0.62"/><circle cx="65.5" cy="50.6" r="0.69" fill="#1e5bb0" opacity="0.66"/><circle cx="60.9" cy="14.5" r="0.36" fill="#3b8ef0" opacity="0.59"/><circle cx="73.2" cy="22.9" r="0.53" fill="#8cc4ff" opacity="0.89"/><circle cx="83.0" cy="16.8" r="0.71" fill="#8cc4ff" opacity="0.69"/><circle cx="35.7" cy="36.9" r="0.64" fill="#5aa8ff" opacity="0.66"/><circle cx="67.2" cy="8.9" r="0.35" fill="#1e5bb0" opacity="0.74"/><circle cx="64.7" cy="17.6" r="0.64" fill="#8cc4ff" opacity="0.55"/><circle cx="57.2" cy="34.8" r="0.55" fill="#5aa8ff" opacity="0.63"/><path d="M36 52 C36 46 33 42 32 38 L29.5 35 L31.5 33 L30.5 30 C31 22 36 12 48 7 C62 2 82 6 92 20 L92 56 L40 56 Z" fill="none" stroke="#3b86e0" stroke-width=".5" opacity=".7"/><rect x="51" y="20" width="7" height="7" fill="#062040" stroke="#4a90e0" stroke-width=".5"/></g></g></svg>
<svg style="position:absolute;left:830px;top:564.0px" width="90" height="89.5" viewBox="0 0 90 89.5"><defs><clipPath id="c3"><ellipse cx="45.0" cy="44.75" rx="45.0" ry="44.75"/></clipPath><filter id="f3" x="-10%" y="-10%" width="120%" height="120%"><feGaussianBlur stdDeviation="1.0"/></filter></defs><g clip-path="url(#c3)"><g filter="url(#f3)"><rect x="0" y="0" width="90" height="90" fill="#f6f6f4"/><rect x="0" y="25" width="12" height="55" fill="#e6ece2"/><path d="M70 14 L90 20 L90 42 L72 40 Z" fill="#dfd6c8"/><rect x="72" y="26" width="18" height="16" fill="#4a4850"/><rect x="76" y="30" width="10" height="9" fill="#cfcdd8"/><rect x="62" y="42" width="28" height="42" fill="#dcdce8"/><rect x="83" y="52" width="7" height="24" fill="#3c3c44"/><path d="M16 82 C20 78 26 76 30 76 L58 82 C62 84 64 88 64 90 L12 90Z" fill="#6a6d72"/><path d="M28 68 L56 72 L60 90 L26 90Z" fill="#c09886"/><path d="M26 44 C26 30 36 26 48 27 C62 28 70 36 69 50 C68 66 62 78 50 80 C36 80 28 68 26 56Z" fill="#cba594"/><ellipse cx="22" cy="56" rx="4.5" ry="7" fill="#b98e7a"/><path d="M16 58 C10 40 14 18 30 12 C44 6 64 8 72 20 C78 30 76 44 72 54 C70 44 68 36 62 32 C52 28 40 28 32 32 C28 38 26 48 24 56 C22 60 18 62 16 58Z" fill="#acacac"/><path d="M22 30 C30 16 46 10 60 14 C50 18 36 20 22 30Z" fill="#d2d2d2"/><path d="M40 16 C48 12 60 14 68 22 C58 20 50 18 40 16Z" fill="#8e8e8e"/><rect x="34" y="44" width="11" height="2.2" rx="1" fill="#5a4a44"/><rect x="53" y="45" width="11" height="2.2" rx="1" fill="#5a4a44"/><ellipse cx="40" cy="49" rx="3" ry="1.3" fill="#3a2a24"/><ellipse cx="58" cy="50" rx="3" ry="1.3" fill="#3a2a24"/><path d="M50 50 C49 56 48 60 52 61" stroke="#9a7060" stroke-width="1.4" fill="none"/><path d="M42 66 C48 68 54 68 58 66" stroke="#8a5a50" stroke-width="1.8" fill="none"/></g></g></svg>
<div class="t" style="left:1217.55px;top:599.60px;font-size:26px;line-height:26px;font-weight:400;color:#333;letter-spacing:0px;">Loeber</div>
<div class="t" style="left:1502.55px;top:599.60px;font-size:26px;line-height:26px;font-weight:400;color:#333;letter-spacing:0px;">Mar 13, 2022</div>
<div class="t" style="left:1788.35px;top:599.60px;font-size:26px;line-height:26px;font-weight:400;color:#333;letter-spacing:0px;">Non</div>
<div class="t" style="left:1937.05px;top:599.60px;font-size:26px;line-height:26px;font-weight:400;color:#333;letter-spacing:0px;">12</div>
<div class="t" style="left:2059.05px;top:599.60px;font-size:26px;line-height:26px;font-weight:400;color:#333;letter-spacing:0px;">diam neque</div>
<div style="position:absolute;left:46px;top:678px;width:3008px;height:142px;background:#f4f4f4;"></div>
<div style="position:absolute;left:46px;top:678px;width:3008px;height:1px;background:#dcdcdc;"></div>
<div class="t" style="left:61.55px;top:735.60px;font-size:26px;line-height:26px;font-weight:400;color:#333;letter-spacing:0px;">174</div>
<div class="t" style="left:167.65px;top:735.60px;font-size:26px;line-height:26px;font-weight:400;color:#333;letter-spacing:0px;">Ragnar</div>
<svg style="position:absolute;left:461px;top:699.7px" width="90" height="90" viewBox="0 0 90 90"><defs><clipPath id="c4"><ellipse cx="45.0" cy="45.0" rx="45.0" ry="45.0"/></clipPath><filter id="f4" x="-10%" y="-10%" width="120%" height="120%"><feGaussianBlur stdDeviation="0.35"/></filter></defs><g clip-path="url(#c4)"><g filter="url(#f4)"><rect x="0" y="0" width="90" height="90" fill="#ffffff"/><text x="45" y="8.5" text-anchor="middle" font-family="Liberation Sans" font-size="3.2" fill="#333">Pascal Roques · Frédé</text><text x="45" y="22" text-anchor="middle" font-family="Liberation Sans" font-size="9" fill="#3f7fd4" textLength="34" lengthAdjust="spacingAndGlyphs">Ingénierie</text><text x="45" y="33.5" text-anchor="middle" font-family="Liberation Sans" font-size="9.5" fill="#3f7fd4"><tspan font-size="5.5">des </tspan>besoins</text><svg x="13" y="40.3" width="64" height="43" viewBox="13 40.3 64 43" overflow="hidden"><g filter="none"><rect x="13" y="40" width="64" height="44" fill="#a8c0e2"/><path d="M13 41 L30 41 L34 50 L27 54 L13 48 Z" fill="#e3dcc6"/><path d="M25 46 L33 50 L30 56 L22 53 Z" fill="#f4f4f6"/><path d="M13 48 L28 54 L26 62 L13 60 Z" fill="#1d2f6e"/><path d="M13 66 L26 60 L31 70 L22 80 L13 80 Z" fill="#2b4b9c"/><path d="M20 80 L30 74 L36 84 L18 84 Z" fill="#3a3e4a"/><path d="M27 72 L33 68 L38 78 L32 83 Z" fill="#eef0f4"/><path d="M40 40 L50 40 L49 50 L41 50 Z" fill="#f2f2f4"/><path d="M58 41 L77 41 L77 50 L64 54 Z" fill="#3c424c"/><path d="M53 46 L59 42 L65 52 L58 56 Z" fill="#f0f0f4"/><path d="M66 63 L77 68 L77 84 L62 84 L60 74 Z" fill="#4a525e"/><path d="M58 62 L66 64 L61 75 L54 72 Z" fill="#eef0f4"/><path d="M46 76 L58 76 L60 84 L46 84 Z" fill="#e8ecf4"/><path d="M26 56 C30 50 40 46 50 48 C58 48 62 52 62 58 C64 64 62 70 56 74 C50 78 42 78 36 74 C30 70 26 64 26 56 Z" fill="#dcae8e"/><ellipse cx="38" cy="60" rx="9" ry="6" fill="#e8c2a4"/><ellipse cx="52" cy="57" rx="8" ry="5" fill="#cf9a78"/><ellipse cx="48" cy="68" rx="9" ry="5" fill="#e2b898"/></g></svg><text x="45" y="87.5" text-anchor="middle" font-family="Liberation Sans" font-size="2.6" fill="#555">*** Édition française ***</text></g></g></svg>
<svg style="position:absolute;left:830px;top:693.4px" width="90" height="102.6" viewBox="0 0 90 102.6"><defs><clipPath id="c5"><ellipse cx="45.0" cy="51.3" rx="45.0" ry="51.3"/></clipPath><filter id="f5" x="-10%" y="-10%" width="120%" height="120%"><feGaussianBlur stdDeviation="1.1"/></filter></defs><g clip-path="url(#c5)"><g filter="url(#f5)"><rect x="0" y="0" width="90" height="103" fill="#161616"/><ellipse cx="82" cy="48" rx="8" ry="22" fill="#333"/><ellipse cx="10" cy="60" rx="6" ry="20" fill="#2a2a2a"/><path d="M12 88 C20 82 28 82 36 86 L50 103 L8 103Z" fill="#dcdcdc"/><path d="M28 78 L58 82 L60 103 L44 103 C38 94 32 88 28 84Z" fill="#bcbcbc"/><path d="M26 42 C28 26 40 18 54 20 C66 22 72 34 72 50 C72 66 66 84 52 87 C38 89 28 76 25 60 C24 52 25 46 26 42Z" fill="#c2c2c2"/><ellipse cx="44" cy="34" rx="11" ry="8" fill="#d4d4d4"/><ellipse cx="40" cy="58" rx="7" ry="6" fill="#cdcdcd"/><ellipse cx="55" cy="80" rx="9" ry="5" fill="#d0d0d0"/><ellipse cx="21.5" cy="53" rx="4.5" ry="9" fill="#b4b4b4"/><path d="M36 47 C39 45 43 45 46 47" stroke="#333" stroke-width="1.6" fill="none"/><path d="M59 45 C62 43 66 43 69 45" stroke="#444" stroke-width="1.6" fill="none"/><ellipse cx="41" cy="48.5" rx="3.5" ry="1.6" fill="#3a3a3a"/><ellipse cx="64" cy="46.5" rx="3.5" ry="1.6" fill="#4a4a4a"/><path d="M43 66 C51 69 59 68 64 64 C62 72 54 74 45 70Z" fill="#f2f2f2"/><path d="M56 50 C58 56 58 60 54 61" stroke="#7a7a7a" stroke-width="1.3" fill="none"/><path d="M68 28 C76 40 74 70 62 98 L90 103 L90 20Z" fill="#141414"/><path d="M28 30 C22 34 18 44 17 50 C16 40 14 30 20 12 Z" fill="#141414"/></g></g></svg>
<div class="t" style="left:1217.55px;top:735.60px;font-size:26px;line-height:26px;font-weight:400;color:#333;letter-spacing:0px;">Andreia</div>
<div class="t" style="left:1502.55px;top:735.60px;font-size:26px;line-height:26px;font-weight:400;color:#333;letter-spacing:0px;">May 5, 2022</div>
<div class="t" style="left:1788.35px;top:735.60px;font-size:26px;line-height:26px;font-weight:400;color:#333;letter-spacing:0px;">Non</div>
<div class="t" style="left:1937.05px;top:735.60px;font-size:26px;line-height:26px;font-weight:400;color:#333;letter-spacing:0px;">0</div>
<div class="t" style="left:2059.05px;top:735.60px;font-size:26px;line-height:26px;font-weight:400;color:#333;letter-spacing:0px;">blandit ultrices enim</div>
<div style="position:absolute;left:46px;top:820px;width:3008px;height:126px;background:#f9f9f9;"></div>
<div style="position:absolute;left:46px;top:820px;width:3008px;height:1px;background:#dcdcdc;"></div>
<div class="t" style="left:61.55px;top:869.60px;font-size:26px;line-height:26px;font-weight:400;color:#333;letter-spacing:0px;">187</div>
<div class="t" style="left:167.65px;top:869.60px;font-size:26px;line-height:26px;font-weight:400;color:#333;letter-spacing:0px;">Robinson</div>
<svg style="position:absolute;left:461px;top:848.2px" width="90" height="56" viewBox="0 0 90 56"><path d="M29.6 5.3 C31.5 10 29 13.5 25 17.5 C20 22 17.5 24 19.5 27 C21 28.8 23 29.3 24.3 29.5 C22.8 27.8 21.8 25.5 23.5 22.5 C26 18.5 32.5 14 29.6 5.3 Z" fill="#d9332b"/><path d="M34 14.3 C30.5 15.5 25.5 18.5 24.6 21.5 C23.8 24.5 27 26.5 26.6 28.5 C26.4 29.5 26 30.2 25.8 30.8 C28.5 29.5 29.2 27.5 28.2 25.2 C27 22.5 26.8 20 34 14.3 Z" fill="#d9332b"/><path d="M11.2 32.9 C16 31.2 20.5 31.4 24 31.6 M11.2 33.2 C18 35.3 27 35 32 32.7" fill="none" stroke="#2f6db5" stroke-width="1.9"/><path d="M35.8 29.8 C41.5 30 42.5 36 34.6 38.4" fill="none" stroke="#2f6db5" stroke-width="1.8"/><path d="M15 36.3 C20 38.8 28 38.6 32 37.1" fill="none" stroke="#2f6db5" stroke-width="2"/><path d="M16.3 41.5 C21 43.6 27.5 43.4 30.7 41.9" fill="none" stroke="#2f6db5" stroke-width="2"/><path d="M7.8 45.4 C14 48.5 31 48.6 39.5 46" fill="none" stroke="#2f6db5" stroke-width="1.8"/><path d="M14.5 49.5 C24 51.2 34 50.5 41 47.3" fill="none" stroke="#2f6db5" stroke-width="1.3" opacity=".75"/><text x="45.2" y="37.1" font-family="Liberation Sans" font-size="19.5" fill="#d9332b" textLength="34" lengthAdjust="spacingAndGlyphs">Java</text></svg>
<svg style="position:absolute;left:830px;top:835.7px" width="90" height="86" viewBox="0 0 90 86"><defs><clipPath id="c6"><ellipse cx="45.0" cy="43.0" rx="45.0" ry="43.0"/></clipPath><filter id="f6" x="-10%" y="-10%" width="120%" height="120%"><feGaussianBlur stdDeviation="1.1"/></filter></defs><g clip-path="url(#c6)"><g filter="url(#f6)"><rect x="0" y="0" width="90" height="86" fill="#eceeec"/><rect x="25" y="0" width="65" height="9" fill="#c6cec4"/><rect x="0" y="10" width="18" height="76" fill="#bdbdc0"/><rect x="17" y="12" width="9" height="34" fill="#1e2022"/><rect x="25" y="14" width="65" height="2" fill="#9aa09a"/><rect x="33" y="22" width="5" height="12" fill="#a8aaa8"/><rect x="74" y="22" width="6" height="12" fill="#a0a2a0"/><rect x="62" y="35" width="28" height="11" fill="#2a2b2d"/><rect x="62" y="46" width="28" height="40" fill="#807c78"/><rect x="62" y="52" width="28" height="2" fill="#c8c6c2"/><rect x="6" y="36" width="34" height="34" rx="3" fill="#17306e"/><rect x="58" y="40" width="13" height="18" fill="#1d3a80"/><path d="M0 86 L6 66 C16 58 28 52 40 50 L62 53 C74 57 84 64 90 72 L90 86 Z" fill="#74767c"/><path d="M10 70 L90 70 M10 78 L90 78 M20 60 L20 86 M36 54 L36 86 M70 58 L70 86" stroke="#8a8c90" stroke-width="2.5" opacity=".5"/><path d="M42 50 L52 66 L60 52 Z" fill="#4e4a48"/><rect x="44" y="42" width="17" height="12" fill="#6a5048"/><ellipse cx="53" cy="34" rx="14.5" ry="19" fill="#7c5e54"/><ellipse cx="51" cy="30" rx="9" ry="10" fill="#8a6c60"/><path d="M38 28 C37 13 47 9 54 9 C63 9 70 15 69 30 C67 21 61 17 53 17 C45 17 40 21 38 28Z" fill="#3c302c"/><rect x="41" y="28" width="25" height="3.5" rx="1.5" fill="#463834"/></g></g></svg>
<div class="t" style="left:1217.55px;top:869.60px;font-size:26px;line-height:26px;font-weight:400;color:#333;letter-spacing:0px;">Kermit</div>
<div class="t" style="left:1502.55px;top:869.60px;font-size:26px;line-height:26px;font-weight:400;color:#333;letter-spacing:0px;">Apr 11, 2022</div>
<div class="t" style="left:1788.35px;top:869.60px;font-size:26px;line-height:26px;font-weight:400;color:#333;letter-spacing:0px;">Oui</div>
<div class="t" style="left:1937.05px;top:869.60px;font-size:26px;line-height:26px;font-weight:400;color:#333;letter-spacing:0px;">8</div>
<div class="t" style="left:2059.05px;top:869.60px;font-size:26px;line-height:26px;font-weight:400;color:#333;letter-spacing:0px;">platea dictumst</div>
<div style="position:absolute;left:46px;top:946px;width:3008px;height:132.5px;background:#f4f4f4;"></div>
<div style="position:absolute;left:46px;top:946px;width:3008px;height:1px;background:#dcdcdc;"></div>
<div class="t" style="left:61.55px;top:998.85px;font-size:26px;line-height:26px;font-weight:400;color:#333;letter-spacing:0px;">181</div>
<div class="t" style="left:167.65px;top:998.85px;font-size:26px;line-height:26px;font-weight:400;color:#333;letter-spacing:0px;">Shara</div>
<svg style="position:absolute;left:461px;top:986.5px" width="90" height="43" viewBox="0 0 90 43"><defs><clipPath id="c7"><ellipse cx="45.0" cy="21.5" rx="45.0" ry="21.5"/></clipPath><filter id="f7" x="-10%" y="-10%" width="120%" height="120%"><feGaussianBlur stdDeviation="0.3"/></filter></defs><g clip-path="url(#c7)"><g filter="url(#f7)"><rect x="0" y="0" width="90" height="43" fill="#414141"/><circle cx="45" cy="32" r="9" fill="none" stroke="#cfcfcf" stroke-width=".6"/><circle cx="28" cy="9" r="5" fill="none" stroke="#cfcfcf" stroke-width=".6"/><circle cx="44" cy="9" r="5" fill="none" stroke="#cfcfcf" stroke-width=".6"/><circle cx="64" cy="12" r="5" fill="none" stroke="#cfcfcf" stroke-width=".6"/><circle cx="15" cy="20" r="5" fill="none" stroke="#cfcfcf" stroke-width=".6"/><circle cx="31" cy="21" r="4" fill="none" stroke="#cfcfcf" stroke-width=".6"/><circle cx="67" cy="29" r="5" fill="none" stroke="#cfcfcf" stroke-width=".6"/><circle cx="80" cy="20" r="5" fill="none" stroke="#cfcfcf" stroke-width=".6"/><circle cx="22" cy="33" r="5" fill="none" stroke="#cfcfcf" stroke-width=".6"/><circle cx="82" cy="35" r="4" fill="none" stroke="#cfcfcf" stroke-width=".6"/><circle cx="56" cy="22" r="4" fill="none" stroke="#cfcfcf" stroke-width=".6"/><line x1="45" y1="32" x2="28" y2="9" stroke="#9a9a9a" stroke-width=".35"/><line x1="45" y1="32" x2="44" y2="9" stroke="#9a9a9a" stroke-width=".35"/><line x1="45" y1="32" x2="64" y2="12" stroke="#9a9a9a" stroke-width=".35"/><line x1="45" y1="32" x2="15" y2="20" stroke="#9a9a9a" stroke-width=".35"/><line x1="45" y1="32" x2="31" y2="21" stroke="#9a9a9a" stroke-width=".35"/><line x1="45" y1="32" x2="67" y2="29" stroke="#9a9a9a" stroke-width=".35"/><line x1="45" y1="32" x2="80" y2="20" stroke="#9a9a9a" stroke-width=".35"/><line x1="45" y1="32" x2="22" y2="33" stroke="#9a9a9a" stroke-width=".35"/><line x1="45" y1="32" x2="82" y2="35" stroke="#9a9a9a" stroke-width=".35"/><line x1="45" y1="32" x2="56" y2="22" stroke="#9a9a9a" stroke-width=".35"/><circle cx="45" cy="32" r="9" fill="#414141" stroke="#e8e8e8" stroke-width="1"/><text x="45" y="30" text-anchor="middle" font-family="Liberation Sans" font-weight="700" font-size="4.6" fill="#fff">BIG</text><text x="45" y="36" text-anchor="middle" font-family="Liberation Sans" font-weight="700" font-size="4.6" fill="#fff">DATA</text><circle cx="64" cy="12" r="3.5" fill="#f0f0f0"/><rect x="26" y="6" width="5" height="6" fill="#dcdcdc"/><rect x="13" y="18" width="5" height="5" fill="#dcdcdc"/><rect x="62" y="27" width="6" height="4" fill="#cfcfcf"/><path d="M20 33 L26 38" stroke="#8fd0e8" stroke-width="1.5"/></g></g></svg>
<svg style="position:absolute;left:830px;top:961.2px" width="90" height="93.5" viewBox="0 0 90 93.5"><defs><clipPath id="c8"><ellipse cx="45.0" cy="46.75" rx="45.0" ry="46.75"/></clipPath><filter id="f8" x="-10%" y="-10%" width="120%" height="120%"><feGaussianBlur stdDeviation="1.0"/></filter></defs><g clip-path="url(#c8)"><g filter="url(#f8)"><rect x="0" y="0" width="90" height="94" fill="#a0a0a0"/><rect x="0" y="0" width="90" height="48" fill="#a6a6a6"/><rect x="4" y="0" width="10" height="48" fill="#b0b0b0"/><rect x="12" y="14" width="4" height="34" fill="#262626"/><rect x="16" y="12" width="6" height="36" fill="#9e9e9e"/><rect x="78" y="18" width="8" height="32" fill="#262626"/><rect x="70" y="14" width="6" height="36" fill="#555"/><rect x="0" y="49" width="90" height="5" fill="#bdbdbd"/><rect x="0" y="55" width="90" height="9" fill="#262626"/><rect x="0" y="64" width="90" height="30" fill="#9a9a9a"/><rect x="10" y="68" width="3" height="26" fill="#2a2a2a"/><rect x="15" y="68" width="4" height="26" fill="#cfcfcf"/><rect x="21" y="68" width="3" height="26" fill="#444"/><rect x="66" y="70" width="16" height="24" fill="#e6e6e6"/><rect x="82" y="68" width="4" height="26" fill="#1e1e1e"/><path d="M20 94 L28 82 C36 80 44 80 52 81 L70 84 L74 94Z" fill="#2a2a2a"/><path d="M36 80 L50 80 L52 94 L36 94Z" fill="#dadada"/><ellipse cx="46" cy="52" rx="21" ry="30" fill="#dedede"/><path d="M48 22 C62 24 68 38 66 56 C64 70 58 78 50 82 C52 60 52 40 48 22Z" fill="#b0b0b0"/><ellipse cx="68" cy="52" rx="4" ry="8" fill="#777"/><path d="M24 42 C20 22 30 6 48 5 C66 4 82 16 78 40 L72 56 C70 38 66 24 54 18 C42 16 32 22 28 36 Z" fill="#1c1c1c"/><circle cx="36.5" cy="40" r="8" fill="none" stroke="#1a1a1a" stroke-width="1.7"/><circle cx="58.5" cy="41" r="8" fill="none" stroke="#1a1a1a" stroke-width="1.7"/><path d="M44.5 39.5 L50.5 39.5" stroke="#1a1a1a" stroke-width="1.7"/><path d="M44 50 L42 54 L47 56" stroke="#444" stroke-width="1.3" fill="none"/><path d="M38 62 C44 64 52 64 58 62" stroke="#333" stroke-width="1.5" fill="none"/></g></g></svg>
<div class="t" style="left:1217.55px;top:998.85px;font-size:26px;line-height:26px;font-weight:400;color:#333;letter-spacing:0px;">Detoc</div>
<div class="t" style="left:1502.55px;top:998.85px;font-size:26px;line-height:26px;font-weight:400;color:#333;letter-spacing:0px;">Dec 22, 2022</div>
<div class="t" style="left:1788.35px;top:998.85px;font-size:26px;line-height:26px;font-weight:400;color:#333;letter-spacing:0px;">Oui</div>
<div class="t" style="left:1937.05px;top:998.85px;font-size:26px;line-height:26px;font-weight:400;color:#333;letter-spacing:0px;">19</div>
<div class="t" style="left:2059.05px;top:998.85px;font-size:26px;line-height:26px;font-weight:400;color:#333;letter-spacing:0px;">a suscipit nulla</div>
<div style="position:absolute;left:46px;top:1078.5px;width:3008px;height:141.9000000000001px;background:#f9f9f9;"></div>
<div style="position:absolute;left:46px;top:1078.5px;width:3008px;height:1px;background:#dcdcdc;"></div>
<div class="t" style="left:61.55px;top:1136.05px;font-size:26px;line-height:26px;font-weight:400;color:#333;letter-spacing:0px;">183</div>
<div class="t" style="left:167.65px;top:1136.05px;font-size:26px;line-height:26px;font-weight:400;color:#333;letter-spacing:0px;">Jessalyn</div>
<svg style="position:absolute;left:461px;top:1100.2px" width="90" height="90" viewBox="0 0 90 90"><defs><clipPath id="c9"><ellipse cx="45.0" cy="45.0" rx="45.0" ry="45.0"/></clipPath><filter id="f9" x="-10%" y="-10%" width="120%" height="120%"><feGaussianBlur stdDeviation="0.35"/></filter></defs><g clip-path="url(#c9)"><g filter="url(#f9)"><rect x="0" y="0" width="90" height="90" fill="#ffffff"/><text x="45" y="8.5" text-anchor="middle" font-family="Liberation Sans" font-size="3.2" fill="#333">Pascal Roques · Frédé</text><text x="45" y="22" text-anchor="middle" font-family="Liberation Sans" font-size="9" fill="#3f7fd4" textLength="34" lengthAdjust="spacingAndGlyphs">Ingénierie</text><text x="45" y="33.5" text-anchor="middle" font-family="Liberation Sans" font-size="9.5" fill="#3f7fd4"><tspan font-size="5.5">des </tspan>besoins</text><svg x="13" y="40.3" width="64" height="43" viewBox="13 40.3 64 43" overflow="hidden"><g filter="none"><rect x="13" y="40" width="64" height="44" fill="#a8c0e2"/><path d="M13 41 L30 41 L34 50 L27 54 L13 48 Z" fill="#e3dcc6"/><path d="M25 46 L33 50 L30 56 L22 53 Z" fill="#f4f4f6"/><path d="M13 48 L28 54 L26 62 L13 60 Z" fill="#1d2f6e"/><path d="M13 66 L26 60 L31 70 L22 80 L13 80 Z" fill="#2b4b9c"/><path d="M20 80 L30 74 L36 84 L18 84 Z" fill="#3a3e4a"/><path d="M27 72 L33 68 L38 78 L32 83 Z" fill="#eef0f4"/><path d="M40 40 L50 40 L49 50 L41 50 Z" fill="#f2f2f4"/><path d="M58 41 L77 41 L77 50 L64 54 Z" fill="#3c424c"/><path d="M53 46 L59 42 L65 52 L58 56 Z" fill="#f0f0f4"/><path d="M66 63 L77 68 L77 84 L62 84 L60 74 Z" fill="#4a525e"/><path d="M58 62 L66 64 L61 75 L54 72 Z" fill="#eef0f4"/><path d="M46 76 L58 76 L60 84 L46 84 Z" fill="#e8ecf4"/><path d="M26 56 C30 50 40 46 50 48 C58 48 62 52 62 58 C64 64 62 70 56 74 C50 78 42 78 36 74 C30 70 26 64 26 56 Z" fill="#dcae8e"/><ellipse cx="38" cy="60" rx="9" ry="6" fill="#e8c2a4"/><ellipse cx="52" cy="57" rx="8" ry="5" fill="#cf9a78"/><ellipse cx="48" cy="68" rx="9" ry="5" fill="#e2b898"/></g></svg><text x="45" y="87.5" text-anchor="middle" font-family="Liberation Sans" font-size="2.6" fill="#555">*** Édition française ***</text></g></g></svg>
<svg style="position:absolute;left:830px;top:1093.9px" width="90" height="102.6" viewBox="0 0 90 102.6"><defs><clipPath id="c10"><ellipse cx="45.0" cy="51.3" rx="45.0" ry="51.3"/></clipPath><filter id="f10" x="-10%" y="-10%" width="120%" height="120%"><feGaussianBlur stdDeviation="1.1"/></filter></defs><g clip-path="url(#c10)"><g filter="url(#f10)"><rect x="0" y="0" width="90" height="103" fill="#161616"/><ellipse cx="82" cy="48" rx="8" ry="22" fill="#333"/><ellipse cx="10" cy="60" rx="6" ry="20" fill="#2a2a2a"/><path d="M12 88 C20 82 28 82 36 86 L50 103 L8 103Z" fill="#dcdcdc"/><path d="M28 78 L58 82 L60 103 L44 103 C38 94 32 88 28 84Z" fill="#bcbcbc"/><path d="M26 42 C28 26 40 18 54 20 C66 22 72 34 72 50 C72 66 66 84 52 87 C38 89 28 76 25 60 C24 52 25 46 26 42Z" fill="#c2c2c2"/><ellipse cx="44" cy="34" rx="11" ry="8" fill="#d4d4d4"/><ellipse cx="40" cy="58" rx="7" ry="6" fill="#cdcdcd"/><ellipse cx="55" cy="80" rx="9" ry="5" fill="#d0d0d0"/><ellipse cx="21.5" cy="53" rx="4.5" ry="9" fill="#b4b4b4"/><path d="M36 47 C39 45 43 45 46 47" stroke="#333" stroke-width="1.6" fill="none"/><path d="M59 45 C62 43 66 43 69 45" stroke="#444" stroke-width="1.6" fill="none"/><ellipse cx="41" cy="48.5" rx="3.5" ry="1.6" fill="#3a3a3a"/><ellipse cx="64" cy="46.5" rx="3.5" ry="1.6" fill="#4a4a4a"/><path d="M43 66 C51 69 59 68 64 64 C62 72 54 74 45 70Z" fill="#f2f2f2"/><path d="M56 50 C58 56 58 60 54 61" stroke="#7a7a7a" stroke-width="1.3" fill="none"/><path d="M68 28 C76 40 74 70 62 98 L90 103 L90 20Z" fill="#141414"/><path d="M28 30 C22 34 18 44 17 50 C16 40 14 30 20 12 Z" fill="#141414"/></g></g></svg>
<div class="t" style="left:1217.55px;top:1136.05px;font-size:26px;line-height:26px;font-weight:400;color:#333;letter-spacing:0px;">Softley</div>
<div class="t" style="left:1502.55px;top:1136.05px;font-size:26px;line-height:26px;font-weight:400;color:#333;letter-spacing:0px;">Jun 23, 2022</div>
<div class="t" style="left:1788.35px;top:1136.05px;font-size:26px;line-height:26px;font-weight:400;color:#333;letter-spacing:0px;">Non</div>
<div class="t" style="left:1937.05px;top:1136.05px;font-size:26px;line-height:26px;font-weight:400;color:#333;letter-spacing:0px;">2</div>
<div class="t" style="left:2059.05px;top:1136.05px;font-size:26px;line-height:26px;font-weight:400;color:#333;letter-spacing:0px;">suscipit nulla elit</div>
<div style="position:absolute;left:46px;top:1220.4px;width:3008px;height:127.39999999999986px;background:#f4f4f4;"></div>
<div style="position:absolute;left:46px;top:1220.4px;width:3008px;height:1px;background:#dcdcdc;"></div>
<div class="t" style="left:61.55px;top:1270.70px;font-size:26px;line-height:26px;font-weight:400;color:#333;letter-spacing:0px;">165</div>
<div class="t" style="left:167.65px;top:1270.70px;font-size:26px;line-height:26px;font-weight:400;color:#333;letter-spacing:0px;">Leland</div>
<svg style="position:absolute;left:461px;top:1252.6px" width="90" height="54.4" viewBox="0 0 90 54.4"><defs><clipPath id="c11"><ellipse cx="45.0" cy="27.2" rx="45.0" ry="27.2"/></clipPath><filter id="f11" x="-10%" y="-10%" width="120%" height="120%"><feGaussianBlur stdDeviation="0.3"/></filter></defs><g clip-path="url(#c11)"><g filter="url(#f11)"><rect x="0" y="0" width="90" height="55" fill="#262626"/><line x1="0" y1="0" x2="0" y2="55" stroke="#383838" stroke-width=".3"/><line x1="3" y1="0" x2="3" y2="55" stroke="#383838" stroke-width=".3"/><line x1="6" y1="0" x2="6" y2="55" stroke="#383838" stroke-width=".3"/><line x1="9" y1="0" x2="9" y2="55" stroke="#383838" stroke-width=".3"/><line x1="12" y1="0" x2="12" y2="55" stroke="#383838" stroke-width=".3"/><line x1="15" y1="0" x2="15" y2="55" stroke="#383838" stroke-width=".3"/><line x1="18" y1="0" x2="18" y2="55" stroke="#383838" stroke-width=".3"/><line x1="21" y1="0" x2="21" y2="55" stroke="#383838" stroke-width=".3"/><line x1="24" y1="0" x2="24" y2="55" stroke="#383838" stroke-width=".3"/><line x1="27" y1="0" x2="27" y2="55" stroke="#383838" stroke-width=".3"/><line x1="30" y1="0" x2="30" y2="55" stroke="#383838" stroke-width=".3"/><line x1="33" y1="0" x2="33" y2="55" stroke="#383838" stroke-width=".3"/><line x1="36" y1="0" x2="36" y2="55" stroke="#383838" stroke-width=".3"/><line x1="39" y1="0" x2="39" y2="55" stroke="#383838" stroke-width=".3"/><line x1="42" y1="0" x2="42" y2="55" stroke="#383838" stroke-width=".3"/><line x1="45" y1="0" x2="45" y2="55" stroke="#383838" stroke-width=".3"/><line x1="48" y1="0" x2="48" y2="55" stroke="#383838" stroke-width=".3"/><line x1="51" y1="0" x2="51" y2="55" stroke="#383838" stroke-width=".3"/><line x1="54" y1="0" x2="54" y2="55" stroke="#383838" stroke-width=".3"/><line x1="57" y1="0" x2="57" y2="55" stroke="#383838" stroke-width=".3"/><line x1="60" y1="0" x2="60" y2="55" stroke="#383838" stroke-width=".3"/><line x1="63" y1="0" x2="63" y2="55" stroke="#383838" stroke-width=".3"/><line x1="66" y1="0" x2="66" y2="55" stroke="#383838" stroke-width=".3"/><line x1="69" y1="0" x2="69" y2="55" stroke="#383838" stroke-width=".3"/><line x1="72" y1="0" x2="72" y2="55" stroke="#383838" stroke-width=".3"/><line x1="75" y1="0" x2="75" y2="55" stroke="#383838" stroke-width=".3"/><line x1="78" y1="0" x2="78" y2="55" stroke="#383838" stroke-width=".3"/><line x1="81" y1="0" x2="81" y2="55" stroke="#383838" stroke-width=".3"/><line x1="84" y1="0" x2="84" y2="55" stroke="#383838" stroke-width=".3"/><line x1="87" y1="0" x2="87" y2="55" stroke="#383838" stroke-width=".3"/><line x1="90" y1="0" x2="90" y2="55" stroke="#383838" stroke-width=".3"/><line x1="0" y1="0" x2="90" y2="0" stroke="#383838" stroke-width=".3"/><line x1="0" y1="3" x2="90" y2="3" stroke="#383838" stroke-width=".3"/><line x1="0" y1="6" x2="90" y2="6" stroke="#383838" stroke-width=".3"/><line x1="0" y1="9" x2="90" y2="9" stroke="#383838" stroke-width=".3"/><line x1="0" y1="12" x2="90" y2="12" stroke="#383838" stroke-width=".3"/><line x1="0" y1="15" x2="90" y2="15" stroke="#383838" stroke-width=".3"/><line x1="0" y1="18" x2="90" y2="18" stroke="#383838" stroke-width=".3"/><line x1="0" y1="21" x2="90" y2="21" stroke="#383838" stroke-width=".3"/><line x1="0" y1="24" x2="90" y2="24" stroke="#383838" stroke-width=".3"/><line x1="0" y1="27" x2="90" y2="27" stroke="#383838" stroke-width=".3"/><line x1="0" y1="30" x2="90" y2="30" stroke="#383838" stroke-width=".3"/><line x1="0" y1="33" x2="90" y2="33" stroke="#383838" stroke-width=".3"/><line x1="0" y1="36" x2="90" y2="36" stroke="#383838" stroke-width=".3"/><line x1="0" y1="39" x2="90" y2="39" stroke="#383838" stroke-width=".3"/><line x1="0" y1="42" x2="90" y2="42" stroke="#383838" stroke-width=".3"/><line x1="0" y1="45" x2="90" y2="45" stroke="#383838" stroke-width=".3"/><line x1="0" y1="48" x2="90" y2="48" stroke="#383838" stroke-width=".3"/><line x1="0" y1="51" x2="90" y2="51" stroke="#383838" stroke-width=".3"/><line x1="0" y1="54" x2="90" y2="54" stroke="#383838" stroke-width=".3"/><path d="M6.2 8.5 L24.9 8.1 L25.4 17.2 L6.5 17.5 Z" fill="none" stroke="#2a7aa8" stroke-width=".6"/><path d="M28 4.1 L55 3.6999999999999997 L55.5 12 L28.3 12.3 Z" fill="none" stroke="#2a7aa8" stroke-width=".6"/><path d="M60 7.6 L81 7.199999999999999 L81.5 15 L60.3 15.3 Z" fill="none" stroke="#2a7aa8" stroke-width=".6"/><path d="M5.7 36.3 L28.8 35.9 L29.3 44.6 L6.0 44.9 Z" fill="none" stroke="#2a7aa8" stroke-width=".6"/><path d="M31.8 41.6 L54 41.2 L54.5 48.5 L32.1 48.8 Z" fill="none" stroke="#2a7aa8" stroke-width=".6"/><path d="M55 35.5 L83.6 35.1 L84.1 43.3 L55.3 43.599999999999994 Z" fill="none" stroke="#2a7aa8" stroke-width=".6"/><path d="M23.6 19.5 L70 18.5 L72.3 31.5 L27 32.8 Z" fill="none" stroke="#d0d0d0" stroke-width=".7"/><text x="30" y="25.5" font-family="Liberation Sans" font-size="4.8" fill="#e4e4e4" textLength="29" lengthAdjust="spacingAndGlyphs">Gestion de</text><text x="32" y="30.7" font-family="Liberation Sans" font-size="5.6" fill="#e4e4e4" textLength="24.6" lengthAdjust="spacingAndGlyphs">PROJET</text><text x="7" y="15" font-family="Liberation Sans" font-size="5.6" fill="#e4e4e4" textLength="16" lengthAdjust="spacingAndGlyphs">Plan</text><text x="31" y="9.4" font-family="Liberation Sans" font-size="4" fill="#e4e4e4" textLength="22" lengthAdjust="spacingAndGlyphs">Contrôle</text><text x="63.6" y="13.7" font-family="Liberation Sans" font-size="4.4" fill="#e4e4e4" textLength="16.4" lengthAdjust="spacingAndGlyphs">Budget</text><text x="9.7" y="42.9" font-family="Liberation Sans" font-size="5.6" fill="#e4e4e4" textLength="15.6" lengthAdjust="spacingAndGlyphs">Suivi</text><text x="33.6" y="47.2" font-family="Liberation Sans" font-size="4" fill="#e4e4e4" textLength="18.7" lengthAdjust="spacingAndGlyphs">Stratégie</text><text x="57.5" y="41.1" font-family="Liberation Sans" font-size="4" fill="#e4e4e4" textLength="23.9" lengthAdjust="spacingAndGlyphs">Ressources</text><path d="M61 24 L64 27.5 L70.5 19.4" stroke="#2f8fd0" stroke-width="1.3" fill="none"/><path d="M14.9 18.5 C16 22 19 24 22.3 24.2 M37 12 C36.5 15 37.5 17 38 18.5 M60 13.3 C55 14 52 16 51 18.5 M17.5 35.5 C18 31 21 28 24.4 26.8 M44.5 40.7 C48 38 49.5 34 49.7 31 M80.5 32.9 C79 29 77 27.5 74.5 26.3" stroke="#cfcfcf" stroke-width=".55" fill="none"/><circle cx="23.6" cy="8.7" r="1" fill="#fff"/><circle cx="27.5" cy="33.3" r="1.3" fill="#fff"/><circle cx="70" cy="18" r="1.3" fill="#fff"/></g></g></svg>
<svg style="position:absolute;left:830px;top:1236.8px" width="90" height="86" viewBox="0 0 90 86"><defs><clipPath id="c12"><ellipse cx="45.0" cy="43.0" rx="45.0" ry="43.0"/></clipPath><filter id="f12" x="-10%" y="-10%" width="120%" height="120%"><feGaussianBlur stdDeviation="1.1"/></filter></defs><g clip-path="url(#c12)"><g filter="url(#f12)"><rect x="0" y="0" width="90" height="86" fill="#e6edf2"/><ellipse cx="8" cy="44" rx="16" ry="26" fill="#c8d49a"/><ellipse cx="18" cy="72" rx="24" ry="14" fill="#6f9a4a"/><ellipse cx="16" cy="26" rx="12" ry="18" fill="#f4f6e6"/><ellipse cx="78" cy="30" rx="14" ry="20" fill="#d6e0ea"/><path d="M22 86 L32 66 C40 62 54 56 64 54 C74 58 84 64 90 72 L90 86Z" fill="#3b5183"/><path d="M36 70 L46 64 L52 86 L34 86Z" fill="#1f2b48"/><path d="M36 56 L60 52 L56 70 L40 72Z" fill="#c89886"/><ellipse cx="43" cy="40" rx="16" ry="22" fill="#dfb2a0"/><ellipse cx="62" cy="44" rx="4" ry="6" fill="#d2a08a"/><path d="M30 54 C32 66 38 70 44 70 C50 70 52 64 52 56 C46 58 38 58 30 54Z" fill="#bcb6b4"/><path d="M32 53 C38 50 46 50 50 54" stroke="#5a4a44" stroke-width="2.4" fill="none"/><path d="M28 34 C26 20 34 14 46 14 C58 14 68 22 67 42 L62 46 C62 30 58 24 50 22 C42 22 34 24 30 32Z" fill="#8c8c8c"/><rect x="30" y="38" width="9" height="2.5" rx="1" fill="#4a3a34"/><rect x="46" y="38" width="9" height="2.5" rx="1" fill="#4a3a34"/></g></g></svg>
<div class="t" style="left:1217.55px;top:1270.70px;font-size:26px;line-height:26px;font-weight:400;color:#333;letter-spacing:0px;">McGiffin</div>
<div class="t" style="left:1502.55px;top:1270.70px;font-size:26px;line-height:26px;font-weight:400;color:#333;letter-spacing:0px;">Apr 25, 2022</div>
<div class="t" style="left:1788.35px;top:1270.70px;font-size:26px;line-height:26px;font-weight:400;color:#333;letter-spacing:0px;">Oui</div>
<div class="t" style="left:1937.05px;top:1270.70px;font-size:26px;line-height:26px;font-weight:400;color:#333;letter-spacing:0px;">8</div>
<div class="t" style="left:2059.05px;top:1270.70px;font-size:26px;line-height:26px;font-weight:400;color:#333;letter-spacing:0px;">posuere cubilia curae</div>
<div style="position:absolute;left:46px;top:1347.8px;width:3008px;height:131.4000000000001px;background:#f9f9f9;"></div>
<div style="position:absolute;left:46px;top:1347.8px;width:3008px;height:1px;background:#dcdcdc;"></div>
<div class="t" style="left:61.55px;top:1400.10px;font-size:26px;line-height:26px;font-weight:400;color:#333;letter-spacing:0px;">168</div>
<div class="t" style="left:167.65px;top:1400.10px;font-size:26px;line-height:26px;font-weight:400;color:#333;letter-spacing:0px;">Jordana</div>
<svg style="position:absolute;left:461px;top:1387.7px" width="90" height="43" viewBox="0 0 90 43"><defs><clipPath id="c13"><ellipse cx="45.0" cy="21.5" rx="45.0" ry="21.5"/></clipPath><filter id="f13" x="-10%" y="-10%" width="120%" height="120%"><feGaussianBlur stdDeviation="0.3"/></filter></defs><g clip-path="url(#c13)"><g filter="url(#f13)"><rect x="0" y="0" width="90" height="43" fill="#414141"/><circle cx="45" cy="32" r="9" fill="none" stroke="#cfcfcf" stroke-width=".6"/><circle cx="28" cy="9" r="5" fill="none" stroke="#cfcfcf" stroke-width=".6"/><circle cx="44" cy="9" r="5" fill="none" stroke="#cfcfcf" stroke-width=".6"/><circle cx="64" cy="12" r="5" fill="none" stroke="#cfcfcf" stroke-width=".6"/><circle cx="15" cy="20" r="5" fill="none" stroke="#cfcfcf" stroke-width=".6"/><circle cx="31" cy="21" r="4" fill="none" stroke="#cfcfcf" stroke-width=".6"/><circle cx="67" cy="29" r="5" fill="none" stroke="#cfcfcf" stroke-width=".6"/><circle cx="80" cy="20" r="5" fill="none" stroke="#cfcfcf" stroke-width=".6"/><circle cx="22" cy="33" r="5" fill="none" stroke="#cfcfcf" stroke-width=".6"/><circle cx="82" cy="35" r="4" fill="none" stroke="#cfcfcf" stroke-width=".6"/><circle cx="56" cy="22" r="4" fill="none" stroke="#cfcfcf" stroke-width=".6"/><line x1="45" y1="32" x2="28" y2="9" stroke="#9a9a9a" stroke-width=".35"/><line x1="45" y1="32" x2="44" y2="9" stroke="#9a9a9a" stroke-width=".35"/><line x1="45" y1="32" x2="64" y2="12" stroke="#9a9a9a" stroke-width=".35"/><line x1="45" y1="32" x2="15" y2="20" stroke="#9a9a9a" stroke-width=".35"/><line x1="45" y1="32" x2="31" y2="21" stroke="#9a9a9a" stroke-width=".35"/><line x1="45" y1="32" x2="67" y2="29" stroke="#9a9a9a" stroke-width=".35"/><line x1="45" y1="32" x2="80" y2="20" stroke="#9a9a9a" stroke-width=".35"/><line x1="45" y1="32" x2="22" y2="33" stroke="#9a9a9a" stroke-width=".35"/><line x1="45" y1="32" x2="82" y2="35" stroke="#9a9a9a" stroke-width=".35"/><line x1="45" y1="32" x2="56" y2="22" stroke="#9a9a9a" stroke-width=".35"/><circle cx="45" cy="32" r="9" fill="#414141" stroke="#e8e8e8" stroke-width="1"/><text x="45" y="30" text-anchor="middle" font-family="Liberation Sans" font-weight="700" font-size="4.6" fill="#fff">BIG</text><text x="45" y="36" text-anchor="middle" font-family="Liberation Sans" font-weight="700" font-size="4.6" fill="#fff">DATA</text><circle cx="64" cy="12" r="3.5" fill="#f0f0f0"/><rect x="26" y="6" width="5" height="6" fill="#dcdcdc"/><rect x="13" y="18" width="5" height="5" fill="#dcdcdc"/><rect x="62" y="27" width="6" height="4" fill="#cfcfcf"/><path d="M20 33 L26 38" stroke="#8fd0e8" stroke-width="1.5"/></g></g></svg>
<svg style="position:absolute;left:830px;top:1362.5px" width="90" height="93.5" viewBox="0 0 90 93.5"><defs><clipPath id="c14"><ellipse cx="45.0" cy="46.75" rx="45.0" ry="46.75"/></clipPath><filter id="f14" x="-10%" y="-10%" width="120%" height="120%"><feGaussianBlur stdDeviation="1.0"/></filter></defs><g clip-path="url(#c14)"><g filter="url(#f14)"><rect x="0" y="0" width="90" height="94" fill="#a0a0a0"/><rect x="0" y="0" width="90" height="48" fill="#a6a6a6"/><rect x="4" y="0" width="10" height="48" fill="#b0b0b0"/><rect x="12" y="14" width="4" height="34" fill="#262626"/><rect x="16" y="12" width="6" height="36" fill="#9e9e9e"/><rect x="78" y="18" width="8" height="32" fill="#262626"/><rect x="70" y="14" width="6" height="36" fill="#555"/><rect x="0" y="49" width="90" height="5" fill="#bdbdbd"/><rect x="0" y="55" width="90" height="9" fill="#262626"/><rect x="0" y="64" width="90" height="30" fill="#9a9a9a"/><rect x="10" y="68" width="3" height="26" fill="#2a2a2a"/><rect x="15" y="68" width="4" height="26" fill="#cfcfcf"/><rect x="21" y="68" width="3" height="26" fill="#444"/><rect x="66" y="70" width="16" height="24" fill="#e6e6e6"/><rect x="82" y="68" width="4" height="26" fill="#1e1e1e"/><path d="M20 94 L28 82 C36 80 44 80 52 81 L70 84 L74 94Z" fill="#2a2a2a"/><path d="M36 80 L50 80 L52 94 L36 94Z" fill="#dadada"/><ellipse cx="46" cy="52" rx="21" ry="30" fill="#dedede"/><path d="M48 22 C62 24 68 38 66 56 C64 70 58 78 50 82 C52 60 52 40 48 22Z" fill="#b0b0b0"/><ellipse cx="68" cy="52" rx="4" ry="8" fill="#777"/><path d="M24 42 C20 22 30 6 48 5 C66 4 82 16 78 40 L72 56 C70 38 66 24 54 18 C42 16 32 22 28 36 Z" fill="#1c1c1c"/><circle cx="36.5" cy="40" r="8" fill="none" stroke="#1a1a1a" stroke-width="1.7"/><circle cx="58.5" cy="41" r="8" fill="none" stroke="#1a1a1a" stroke-width="1.7"/><path d="M44.5 39.5 L50.5 39.5" stroke="#1a1a1a" stroke-width="1.7"/><path d="M44 50 L42 54 L47 56" stroke="#444" stroke-width="1.3" fill="none"/><path d="M38 62 C44 64 52 64 58 62" stroke="#333" stroke-width="1.5" fill="none"/></g></g></svg>
<div class="t" style="left:1217.55px;top:1400.10px;font-size:26px;line-height:26px;font-weight:400;color:#333;letter-spacing:0px;">Fend</div>
<div class="t" style="left:1502.55px;top:1400.10px;font-size:26px;line-height:26px;font-weight:400;color:#333;letter-spacing:0px;">May 3, 2022</div>
<div class="t" style="left:1788.35px;top:1400.10px;font-size:26px;line-height:26px;font-weight:400;color:#333;letter-spacing:0px;">Non</div>
<div class="t" style="left:1937.05px;top:1400.10px;font-size:26px;line-height:26px;font-weight:400;color:#333;letter-spacing:0px;">14</div>
<div class="t" style="left:2059.05px;top:1400.10px;font-size:26px;line-height:26px;font-weight:400;color:#333;letter-spacing:0px;">dolor quis odio</div>
<div style="position:absolute;left:46px;top:1479.2px;width:3008px;height:126.09999999999991px;background:#f4f4f4;"></div>
<div style="position:absolute;left:46px;top:1479.2px;width:3008px;height:1px;background:#dcdcdc;"></div>
<div class="t" style="left:61.55px;top:1528.85px;font-size:26px;line-height:26px;font-weight:400;color:#333;letter-spacing:0px;">215</div>
<div class="t" style="left:167.65px;top:1528.85px;font-size:26px;line-height:26px;font-weight:400;color:#333;letter-spacing:0px;">Stephan</div>
<svg style="position:absolute;left:461px;top:1507.5px" width="90" height="56" viewBox="0 0 90 56"><path d="M29.6 5.3 C31.5 10 29 13.5 25 17.5 C20 22 17.5 24 19.5 27 C21 28.8 23 29.3 24.3 29.5 C22.8 27.8 21.8 25.5 23.5 22.5 C26 18.5 32.5 14 29.6 5.3 Z" fill="#d9332b"/><path d="M34 14.3 C30.5 15.5 25.5 18.5 24.6 21.5 C23.8 24.5 27 26.5 26.6 28.5 C26.4 29.5 26 30.2 25.8 30.8 C28.5 29.5 29.2 27.5 28.2 25.2 C27 22.5 26.8 20 34 14.3 Z" fill="#d9332b"/><path d="M11.2 32.9 C16 31.2 20.5 31.4 24 31.6 M11.2 33.2 C18 35.3 27 35 32 32.7" fill="none" stroke="#2f6db5" stroke-width="1.9"/><path d="M35.8 29.8 C41.5 30 42.5 36 34.6 38.4" fill="none" stroke="#2f6db5" stroke-width="1.8"/><path d="M15 36.3 C20 38.8 28 38.6 32 37.1" fill="none" stroke="#2f6db5" stroke-width="2"/><path d="M16.3 41.5 C21 43.6 27.5 43.4 30.7 41.9" fill="none" stroke="#2f6db5" stroke-width="2"/><path d="M7.8 45.4 C14 48.5 31 48.6 39.5 46" fill="none" stroke="#2f6db5" stroke-width="1.8"/><path d="M14.5 49.5 C24 51.2 34 50.5 41 47.3" fill="none" stroke="#2f6db5" stroke-width="1.3" opacity=".75"/><text x="45.2" y="37.1" font-family="Liberation Sans" font-size="19.5" fill="#d9332b" textLength="34" lengthAdjust="spacingAndGlyphs">Java</text></svg>
<svg style="position:absolute;left:830px;top:1495.0px" width="90" height="86" viewBox="0 0 90 86"><defs><clipPath id="c15"><ellipse cx="45.0" cy="43.0" rx="45.0" ry="43.0"/></clipPath><filter id="f15" x="-10%" y="-10%" width="120%" height="120%"><feGaussianBlur stdDeviation="1.1"/></filter></defs><g clip-path="url(#c15)"><g filter="url(#f15)"><rect x="0" y="0" width="90" height="86" fill="#eceeec"/><rect x="25" y="0" width="65" height="9" fill="#c6cec4"/><rect x="0" y="10" width="18" height="76" fill="#bdbdc0"/><rect x="17" y="12" width="9" height="34" fill="#1e2022"/><rect x="25" y="14" width="65" height="2" fill="#9aa09a"/><rect x="33" y="22" width="5" height="12" fill="#a8aaa8"/><rect x="74" y="22" width="6" height="12" fill="#a0a2a0"/><rect x="62" y="35" width="28" height="11" fill="#2a2b2d"/><rect x="62" y="46" width="28" height="40" fill="#807c78"/><rect x="62" y="52" width="28" height="2" fill="#c8c6c2"/><rect x="6" y="36" width="34" height="34" rx="3" fill="#17306e"/><rect x="58" y="40" width="13" height="18" fill="#1d3a80"/><path d="M0 86 L6 66 C16 58 28 52 40 50 L62 53 C74 57 84 64 90 72 L90 86 Z" fill="#74767c"/><path d="M10 70 L90 70 M10 78 L90 78 M20 60 L20 86 M36 54 L36 86 M70 58 L70 86" stroke="#8a8c90" stroke-width="2.5" opacity=".5"/><path d="M42 50 L52 66 L60 52 Z" fill="#4e4a48"/><rect x="44" y="42" width="17" height="12" fill="#6a5048"/><ellipse cx="53" cy="34" rx="14.5" ry="19" fill="#7c5e54"/><ellipse cx="51" cy="30" rx="9" ry="10" fill="#8a6c60"/><path d="M38 28 C37 13 47 9 54 9 C63 9 70 15 69 30 C67 21 61 17 53 17 C45 17 40 21 38 28Z" fill="#3c302c"/><rect x="41" y="28" width="25" height="3.5" rx="1.5" fill="#463834"/></g></g></svg>
<div class="t" style="left:1217.55px;top:1528.85px;font-size:26px;line-height:26px;font-weight:400;color:#333;letter-spacing:0px;">Cressy</div>
<div class="t" style="left:1502.55px;top:1528.85px;font-size:26px;line-height:26px;font-weight:400;color:#333;letter-spacing:0px;">Jan 8, 2022</div>
<div class="t" style="left:1788.35px;top:1528.85px;font-size:26px;line-height:26px;font-weight:400;color:#333;letter-spacing:0px;">Non</div>
<div class="t" style="left:1937.05px;top:1528.85px;font-size:26px;line-height:26px;font-weight:400;color:#333;letter-spacing:0px;">3</div>
<div class="t" style="left:2059.05px;top:1528.85px;font-size:26px;line-height:26px;font-weight:400;color:#333;letter-spacing:0px;">vel augue vestibulum</div>
<div style="position:absolute;left:46px;top:1605.3px;width:3008px;height:131.70000000000005px;background:#f9f9f9;"></div>
<div style="position:absolute;left:46px;top:1605.3px;width:3008px;height:1px;background:#dcdcdc;"></div>
<div class="t" style="left:61.55px;top:1657.75px;font-size:26px;line-height:26px;font-weight:400;color:#333;letter-spacing:0px;">175</div>
<div class="t" style="left:167.65px;top:1657.75px;font-size:26px;line-height:26px;font-weight:400;color:#333;letter-spacing:0px;">Susan</div>
<svg style="position:absolute;left:461px;top:1645.4px" width="90" height="43" viewBox="0 0 90 43"><defs><clipPath id="c16"><ellipse cx="45.0" cy="21.5" rx="45.0" ry="21.5"/></clipPath><filter id="f16" x="-10%" y="-10%" width="120%" height="120%"><feGaussianBlur stdDeviation="0.3"/></filter></defs><g clip-path="url(#c16)"><g filter="url(#f16)"><rect x="0" y="0" width="90" height="43" fill="#414141"/><circle cx="45" cy="32" r="9" fill="none" stroke="#cfcfcf" stroke-width=".6"/><circle cx="28" cy="9" r="5" fill="none" stroke="#cfcfcf" stroke-width=".6"/><circle cx="44" cy="9" r="5" fill="none" stroke="#cfcfcf" stroke-width=".6"/><circle cx="64" cy="12" r="5" fill="none" stroke="#cfcfcf" stroke-width=".6"/><circle cx="15" cy="20" r="5" fill="none" stroke="#cfcfcf" stroke-width=".6"/><circle cx="31" cy="21" r="4" fill="none" stroke="#cfcfcf" stroke-width=".6"/><circle cx="67" cy="29" r="5" fill="none" stroke="#cfcfcf" stroke-width=".6"/><circle cx="80" cy="20" r="5" fill="none" stroke="#cfcfcf" stroke-width=".6"/><circle cx="22" cy="33" r="5" fill="none" stroke="#cfcfcf" stroke-width=".6"/><circle cx="82" cy="35" r="4" fill="none" stroke="#cfcfcf" stroke-width=".6"/><circle cx="56" cy="22" r="4" fill="none" stroke="#cfcfcf" stroke-width=".6"/><line x1="45" y1="32" x2="28" y2="9" stroke="#9a9a9a" stroke-width=".35"/><line x1="45" y1="32" x2="44" y2="9" stroke="#9a9a9a" stroke-width=".35"/><line x1="45" y1="32" x2="64" y2="12" stroke="#9a9a9a" stroke-width=".35"/><line x1="45" y1="32" x2="15" y2="20" stroke="#9a9a9a" stroke-width=".35"/><line x1="45" y1="32" x2="31" y2="21" stroke="#9a9a9a" stroke-width=".35"/><line x1="45" y1="32" x2="67" y2="29" stroke="#9a9a9a" stroke-width=".35"/><line x1="45" y1="32" x2="80" y2="20" stroke="#9a9a9a" stroke-width=".35"/><line x1="45" y1="32" x2="22" y2="33" stroke="#9a9a9a" stroke-width=".35"/><line x1="45" y1="32" x2="82" y2="35" stroke="#9a9a9a" stroke-width=".35"/><line x1="45" y1="32" x2="56" y2="22" stroke="#9a9a9a" stroke-width=".35"/><circle cx="45" cy="32" r="9" fill="#414141" stroke="#e8e8e8" stroke-width="1"/><text x="45" y="30" text-anchor="middle" font-family="Liberation Sans" font-weight="700" font-size="4.6" fill="#fff">BIG</text><text x="45" y="36" text-anchor="middle" font-family="Liberation Sans" font-weight="700" font-size="4.6" fill="#fff">DATA</text><circle cx="64" cy="12" r="3.5" fill="#f0f0f0"/><rect x="26" y="6" width="5" height="6" fill="#dcdcdc"/><rect x="13" y="18" width="5" height="5" fill="#dcdcdc"/><rect x="62" y="27" width="6" height="4" fill="#cfcfcf"/><path d="M20 33 L26 38" stroke="#8fd0e8" stroke-width="1.5"/></g></g></svg>
<svg style="position:absolute;left:830px;top:1620.1px" width="90" height="93.5" viewBox="0 0 90 93.5"><defs><clipPath id="c17"><ellipse cx="45.0" cy="46.75" rx="45.0" ry="46.75"/></clipPath><filter id="f17" x="-10%" y="-10%" width="120%" height="120%"><feGaussianBlur stdDeviation="1.0"/></filter></defs><g clip-path="url(#c17)"><g filter="url(#f17)"><rect x="0" y="0" width="90" height="94" fill="#a0a0a0"/><rect x="0" y="0" width="90" height="48" fill="#a6a6a6"/><rect x="4" y="0" width="10" height="48" fill="#b0b0b0"/><rect x="12" y="14" width="4" height="34" fill="#262626"/><rect x="16" y="12" width="6" height="36" fill="#9e9e9e"/><rect x="78" y="18" width="8" height="32" fill="#262626"/><rect x="70" y="14" width="6" height="36" fill="#555"/><rect x="0" y="49" width="90" height="5" fill="#bdbdbd"/><rect x="0" y="55" width="90" height="9" fill="#262626"/><rect x="0" y="64" width="90" height="30" fill="#9a9a9a"/><rect x="10" y="68" width="3" height="26" fill="#2a2a2a"/><rect x="15" y="68" width="4" height="26" fill="#cfcfcf"/><rect x="21" y="68" width="3" height="26" fill="#444"/><rect x="66" y="70" width="16" height="24" fill="#e6e6e6"/><rect x="82" y="68" width="4" height="26" fill="#1e1e1e"/><path d="M20 94 L28 82 C36 80 44 80 52 81 L70 84 L74 94Z" fill="#2a2a2a"/><path d="M36 80 L50 80 L52 94 L36 94Z" fill="#dadada"/><ellipse cx="46" cy="52" rx="21" ry="30" fill="#dedede"/><path d="M48 22 C62 24 68 38 66 56 C64 70 58 78 50 82 C52 60 52 40 48 22Z" fill="#b0b0b0"/><ellipse cx="68" cy="52" rx="4" ry="8" fill="#777"/><path d="M24 42 C20 22 30 6 48 5 C66 4 82 16 78 40 L72 56 C70 38 66 24 54 18 C42 16 32 22 28 36 Z" fill="#1c1c1c"/><circle cx="36.5" cy="40" r="8" fill="none" stroke="#1a1a1a" stroke-width="1.7"/><circle cx="58.5" cy="41" r="8" fill="none" stroke="#1a1a1a" stroke-width="1.7"/><path d="M44.5 39.5 L50.5 39.5" stroke="#1a1a1a" stroke-width="1.7"/><path d="M44 50 L42 54 L47 56" stroke="#444" stroke-width="1.3" fill="none"/><path d="M38 62 C44 64 52 64 58 62" stroke="#333" stroke-width="1.5" fill="none"/></g></g></svg>
<div class="t" style="left:1217.55px;top:1657.75px;font-size:26px;line-height:26px;font-weight:400;color:#333;letter-spacing:0px;">Shellard</div>
<div class="t" style="left:1502.55px;top:1657.75px;font-size:26px;line-height:26px;font-weight:400;color:#333;letter-spacing:0px;">Aug 9, 2022</div>
<div class="t" style="left:1788.35px;top:1657.75px;font-size:26px;line-height:26px;font-weight:400;color:#333;letter-spacing:0px;">Non</div>
<div class="t" style="left:1937.05px;top:1657.75px;font-size:26px;line-height:26px;font-weight:400;color:#333;letter-spacing:0px;">16</div>
<div class="t" style="left:2059.05px;top:1657.75px;font-size:26px;line-height:26px;font-weight:400;color:#333;letter-spacing:0px;">mauris viverra diam</div>
<div style="position:absolute;left:46px;top:1773px;width:3008px;height:155px;background:#f7f8fa;border-radius:12px;box-shadow:0 4px 10px rgba(0,0,0,.10),0 1px 4px rgba(0,0,0,.07);"></div>
<div style="position:absolute;left:73px;top:1818px;width:232px;height:65px;background:#4350b1;border-radius:7px;"></div>
<div class="t" style="left:90.75px;top:1836.90px;font-size:26px;line-height:26px;font-weight:400;color:#fff;letter-spacing:1.72px;-webkit-text-stroke:0.45px #fff;">Première Page</div>
<div style="position:absolute;left:314px;top:1818px;width:224px;height:65px;background:#4350b1;border-radius:7px;"></div>
<div class="t" style="left:330.35px;top:1836.90px;font-size:26px;line-height:26px;font-weight:400;color:#fff;letter-spacing:1.64px;-webkit-text-stroke:0.45px #fff;">Dernière Page</div>
<div class="t" style="left:1299.61px;top:1835.92px;font-size:29.5px;line-height:29.5px;font-weight:700;color:#222;letter-spacing:0.7px;transform:scaleX(0.9);transform-origin:0 0;">Page 1 sur 100</div>
<div style="position:absolute;left:2246px;top:1800px;width:781px;height:101px;background:#fff;"></div>
<div class="t" style="left:2267.18px;top:1839.45px;font-size:23px;line-height:23px;font-weight:400;color:#262626;letter-spacing:0px;">Items per page:</div>
<div style="position:absolute;left:2441px;top:1813px;width:151px;height:75px;box-sizing:border-box;border:1.5px solid #9a9a9a;border-radius:6px;"></div>
<div class="t" style="left:2469.28px;top:1839.45px;font-size:23px;line-height:23px;font-weight:400;color:#262626;letter-spacing:0px;">10</div>
<svg style="position:absolute;left:2544.8px;top:1847.4px" width="19" height="10.5" viewBox="0 0 10 5.5"><path d="M0 0h10L5 5.5z" fill="#777"/></svg>
<div class="t" style="left:2656.58px;top:1838.95px;font-size:23px;line-height:23px;font-weight:400;color:#262626;letter-spacing:0.25px;">1 – 10 of 10</div>
<svg style="position:absolute;left:2870px;top:1836px" width="24" height="30" viewBox="0 0 24 30"><polyline points="18.5,5 7.5,15 18.5,25" fill="none" stroke="#dadada" stroke-width="2.8"/></svg>
<svg style="position:absolute;left:2957px;top:1836px" width="24" height="30" viewBox="0 0 24 30"><polyline points="5.5,5 16.5,15 5.5,25" fill="none" stroke="#dadada" stroke-width="2.8"/></svg>
</body></html>
